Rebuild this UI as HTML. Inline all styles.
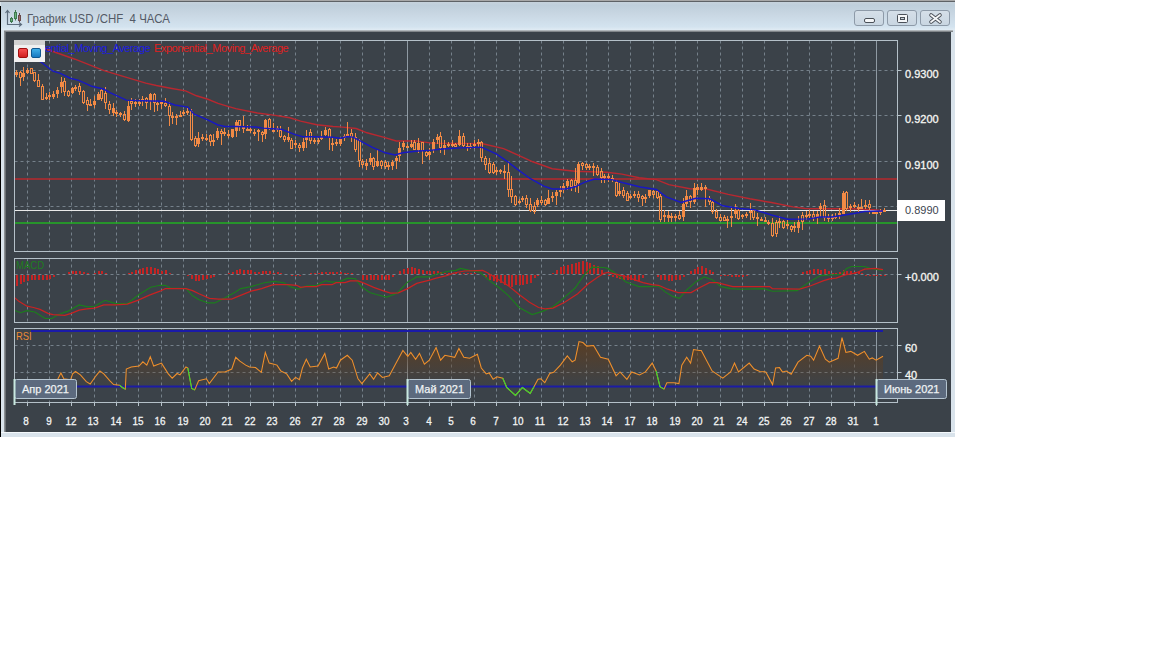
<!DOCTYPE html>
<html><head><meta charset="utf-8"><style>
html,body{margin:0;padding:0;background:#fff;width:1152px;height:648px;overflow:hidden;font-family:"Liberation Sans",sans-serif}
#win{position:absolute;left:0;top:0;width:955px;height:437px;background:#d9e3eb;}
#topb{position:absolute;left:0;top:0;width:955px;height:2px;background:linear-gradient(#a8a8a8 50%,#5e6266 50%)}
#lb{position:absolute;left:0;top:6px;width:1px;height:431px;background:#000}
#tb{position:absolute;left:1px;top:2px;width:954px;height:28px;background:linear-gradient(#c6d2dc 0%,#bfcfdb 12%,#c9d7e3 45%,#d3e3ef 88%,#e0ebf4 100%)}
#title{position:absolute;left:26.5px;top:12px;font-size:12.5px;transform:scaleX(0.915);transform-origin:0 0;color:#545a66;white-space:nowrap}
#dark{position:absolute;left:6px;top:32px;width:945px;height:400px;background:#3b4249}
#shadowT{position:absolute;left:4px;top:30px;width:949px;height:2px;background:linear-gradient(#c8ced2,#6a6e72)}
#shadowL{position:absolute;left:4px;top:32px;width:2px;height:400px;background:linear-gradient(90deg,#9aa0a4,#5a5e62)}
#botw{position:absolute;left:1px;top:432px;width:954px;height:1px;background:#f4f8fb}
svg{position:absolute;left:0;top:0}
.dl{position:absolute;top:415px;width:40px;text-align:center;font-size:11px;color:#f2f4f4;line-height:13px;-webkit-text-stroke:0.3px #f2f4f4;transform:scaleX(0.9)}
.pl{position:absolute;left:905px;font-size:11px;color:#f6f6f2;line-height:13px;-webkit-text-stroke:0.3px #f6f6f2}
.mb{position:absolute;top:383px;font-size:11px;color:#eef2f4;line-height:13px;white-space:nowrap;-webkit-text-stroke:0.25px #eef2f4}
.btn{position:absolute;top:10px;width:28px;height:14px;border:1px solid #8d9aa8;border-radius:3px;background:linear-gradient(#d5dfe8,#c9d6e1)}
#leg{position:absolute;left:14px;top:40px;width:31px;height:22px;background:#f0f0f0}
#legt{position:absolute;left:14px;top:40px;width:31px;height:5px;background:#d2d2d2}
.sq{position:absolute;top:48px;width:8px;height:8px;border-radius:2px}
.lgt{position:absolute;top:42px;font-size:11px;letter-spacing:-0.45px;line-height:13px;white-space:nowrap}
#macdl{position:absolute;left:16px;top:259px;font-size:11px;line-height:13px;color:#1e7e1e;transform:scaleX(0.87);transform-origin:0 0}
#rsil{position:absolute;left:15px;top:329px;width:16px;height:13px;background:#3b4249;overflow:hidden}
#rsit{position:absolute;left:16px;top:330px;font-size:11px;line-height:13px;color:#ec8c34;transform:scaleX(0.85);transform-origin:0 0}
</style></head><body>
<div id="win">
<div id="topb"></div>
<div id="tb"></div>
<div id="lb"></div>
<div id="title">График USD /CHF&nbsp; 4 ЧАСА</div>
<div class="btn" style="left:854px"></div>
<div class="btn" style="left:887px"></div>
<div class="btn" style="left:920px"></div>
<svg width="955" height="31" style="position:absolute;left:0;top:0">
<g fill="none" stroke="#5d6c7c" stroke-width="1.2">
<path d="M7.5 11 V24.5 H21"/><path d="M5.5 13 L7.5 10.5 L9.5 13"/><path d="M19 22.5 L21.5 24.5 L19 26.5"/>
</g>
<g stroke-width="1">
<line x1="11.5" y1="17" x2="11.5" y2="23" stroke="#3f7a4f"/><rect x="10.5" y="18.5" width="2" height="3" fill="#6ab07a" stroke="#3f7a4f"/>
<line x1="15.5" y1="10" x2="15.5" y2="20.5" stroke="#3f7a4f"/><rect x="14.5" y="12.5" width="2" height="6" fill="#6ab07a" stroke="#3f7a4f"/>
<line x1="19.5" y1="13" x2="19.5" y2="22" stroke="#6a4a4a"/><rect x="18.5" y="15.5" width="2" height="5" fill="#a06a6a" stroke="#6a4a4a"/>
</g>
<rect x="864.5" y="18.5" width="10" height="4" rx="1.5" fill="#f4f6f8" stroke="#4a5058" stroke-width="1"/>
<rect x="897.5" y="14.5" width="10" height="8" rx="1" fill="#f4f6f8" stroke="#4a5058" stroke-width="1"/>
<rect x="900.5" y="17.5" width="4" height="2" fill="#c8d0d8" stroke="#4a5058" stroke-width="1"/>
<path d="M931 15 L940 22 M940 15 L931 22" stroke="#4a5058" stroke-width="3.6" stroke-linecap="round"/>
<path d="M931 15 L940 22 M940 15 L931 22" stroke="#f4f6f8" stroke-width="1.8" stroke-linecap="round"/>
</svg>
<div id="shadowT"></div><div id="shadowL"></div>
<div id="dark"></div>
<div id="botw"></div>
</div>
<svg width="1152" height="648" viewBox="0 0 1152 648">
<defs><clipPath id="cp1"><rect x="15" y="41" width="882" height="210"/></clipPath><clipPath id="cp2"><rect x="15" y="259" width="882" height="63"/></clipPath><clipPath id="cp3"><rect x="15" y="329" width="882" height="73"/></clipPath><linearGradient id="rg" x1="0" y1="338" x2="0" y2="388" gradientUnits="userSpaceOnUse"><stop offset="0" stop-color="#5e3e20" stop-opacity="0.95"/><stop offset="1" stop-color="#5e3e20" stop-opacity="0"/></linearGradient></defs>
<line x1="27.5" y1="40.5" x2="27.5" y2="251.5" stroke="#75808a" stroke-dasharray="3 3"/>
<line x1="49.5" y1="40.5" x2="49.5" y2="251.5" stroke="#75808a" stroke-dasharray="3 3"/>
<line x1="71.5" y1="40.5" x2="71.5" y2="251.5" stroke="#75808a" stroke-dasharray="3 3"/>
<line x1="94.5" y1="40.5" x2="94.5" y2="251.5" stroke="#75808a" stroke-dasharray="3 3"/>
<line x1="116.5" y1="40.5" x2="116.5" y2="251.5" stroke="#75808a" stroke-dasharray="3 3"/>
<line x1="138.5" y1="40.5" x2="138.5" y2="251.5" stroke="#75808a" stroke-dasharray="3 3"/>
<line x1="161.5" y1="40.5" x2="161.5" y2="251.5" stroke="#75808a" stroke-dasharray="3 3"/>
<line x1="183.5" y1="40.5" x2="183.5" y2="251.5" stroke="#75808a" stroke-dasharray="3 3"/>
<line x1="206.5" y1="40.5" x2="206.5" y2="251.5" stroke="#75808a" stroke-dasharray="3 3"/>
<line x1="228.5" y1="40.5" x2="228.5" y2="251.5" stroke="#75808a" stroke-dasharray="3 3"/>
<line x1="250.5" y1="40.5" x2="250.5" y2="251.5" stroke="#75808a" stroke-dasharray="3 3"/>
<line x1="273.5" y1="40.5" x2="273.5" y2="251.5" stroke="#75808a" stroke-dasharray="3 3"/>
<line x1="295.5" y1="40.5" x2="295.5" y2="251.5" stroke="#75808a" stroke-dasharray="3 3"/>
<line x1="317.5" y1="40.5" x2="317.5" y2="251.5" stroke="#75808a" stroke-dasharray="3 3"/>
<line x1="340.5" y1="40.5" x2="340.5" y2="251.5" stroke="#75808a" stroke-dasharray="3 3"/>
<line x1="362.5" y1="40.5" x2="362.5" y2="251.5" stroke="#75808a" stroke-dasharray="3 3"/>
<line x1="384.5" y1="40.5" x2="384.5" y2="251.5" stroke="#75808a" stroke-dasharray="3 3"/>
<line x1="429.5" y1="40.5" x2="429.5" y2="251.5" stroke="#75808a" stroke-dasharray="3 3"/>
<line x1="451.5" y1="40.5" x2="451.5" y2="251.5" stroke="#75808a" stroke-dasharray="3 3"/>
<line x1="474.5" y1="40.5" x2="474.5" y2="251.5" stroke="#75808a" stroke-dasharray="3 3"/>
<line x1="496.5" y1="40.5" x2="496.5" y2="251.5" stroke="#75808a" stroke-dasharray="3 3"/>
<line x1="519.5" y1="40.5" x2="519.5" y2="251.5" stroke="#75808a" stroke-dasharray="3 3"/>
<line x1="541.5" y1="40.5" x2="541.5" y2="251.5" stroke="#75808a" stroke-dasharray="3 3"/>
<line x1="563.5" y1="40.5" x2="563.5" y2="251.5" stroke="#75808a" stroke-dasharray="3 3"/>
<line x1="586.5" y1="40.5" x2="586.5" y2="251.5" stroke="#75808a" stroke-dasharray="3 3"/>
<line x1="608.5" y1="40.5" x2="608.5" y2="251.5" stroke="#75808a" stroke-dasharray="3 3"/>
<line x1="630.5" y1="40.5" x2="630.5" y2="251.5" stroke="#75808a" stroke-dasharray="3 3"/>
<line x1="653.5" y1="40.5" x2="653.5" y2="251.5" stroke="#75808a" stroke-dasharray="3 3"/>
<line x1="675.5" y1="40.5" x2="675.5" y2="251.5" stroke="#75808a" stroke-dasharray="3 3"/>
<line x1="697.5" y1="40.5" x2="697.5" y2="251.5" stroke="#75808a" stroke-dasharray="3 3"/>
<line x1="720.5" y1="40.5" x2="720.5" y2="251.5" stroke="#75808a" stroke-dasharray="3 3"/>
<line x1="742.5" y1="40.5" x2="742.5" y2="251.5" stroke="#75808a" stroke-dasharray="3 3"/>
<line x1="764.5" y1="40.5" x2="764.5" y2="251.5" stroke="#75808a" stroke-dasharray="3 3"/>
<line x1="787.5" y1="40.5" x2="787.5" y2="251.5" stroke="#75808a" stroke-dasharray="3 3"/>
<line x1="809.5" y1="40.5" x2="809.5" y2="251.5" stroke="#75808a" stroke-dasharray="3 3"/>
<line x1="831.5" y1="40.5" x2="831.5" y2="251.5" stroke="#75808a" stroke-dasharray="3 3"/>
<line x1="854.5" y1="40.5" x2="854.5" y2="251.5" stroke="#75808a" stroke-dasharray="3 3"/>
<line x1="27.5" y1="258.5" x2="27.5" y2="322.5" stroke="#75808a" stroke-dasharray="3 3"/>
<line x1="49.5" y1="258.5" x2="49.5" y2="322.5" stroke="#75808a" stroke-dasharray="3 3"/>
<line x1="71.5" y1="258.5" x2="71.5" y2="322.5" stroke="#75808a" stroke-dasharray="3 3"/>
<line x1="94.5" y1="258.5" x2="94.5" y2="322.5" stroke="#75808a" stroke-dasharray="3 3"/>
<line x1="116.5" y1="258.5" x2="116.5" y2="322.5" stroke="#75808a" stroke-dasharray="3 3"/>
<line x1="138.5" y1="258.5" x2="138.5" y2="322.5" stroke="#75808a" stroke-dasharray="3 3"/>
<line x1="161.5" y1="258.5" x2="161.5" y2="322.5" stroke="#75808a" stroke-dasharray="3 3"/>
<line x1="183.5" y1="258.5" x2="183.5" y2="322.5" stroke="#75808a" stroke-dasharray="3 3"/>
<line x1="206.5" y1="258.5" x2="206.5" y2="322.5" stroke="#75808a" stroke-dasharray="3 3"/>
<line x1="228.5" y1="258.5" x2="228.5" y2="322.5" stroke="#75808a" stroke-dasharray="3 3"/>
<line x1="250.5" y1="258.5" x2="250.5" y2="322.5" stroke="#75808a" stroke-dasharray="3 3"/>
<line x1="273.5" y1="258.5" x2="273.5" y2="322.5" stroke="#75808a" stroke-dasharray="3 3"/>
<line x1="295.5" y1="258.5" x2="295.5" y2="322.5" stroke="#75808a" stroke-dasharray="3 3"/>
<line x1="317.5" y1="258.5" x2="317.5" y2="322.5" stroke="#75808a" stroke-dasharray="3 3"/>
<line x1="340.5" y1="258.5" x2="340.5" y2="322.5" stroke="#75808a" stroke-dasharray="3 3"/>
<line x1="362.5" y1="258.5" x2="362.5" y2="322.5" stroke="#75808a" stroke-dasharray="3 3"/>
<line x1="384.5" y1="258.5" x2="384.5" y2="322.5" stroke="#75808a" stroke-dasharray="3 3"/>
<line x1="429.5" y1="258.5" x2="429.5" y2="322.5" stroke="#75808a" stroke-dasharray="3 3"/>
<line x1="451.5" y1="258.5" x2="451.5" y2="322.5" stroke="#75808a" stroke-dasharray="3 3"/>
<line x1="474.5" y1="258.5" x2="474.5" y2="322.5" stroke="#75808a" stroke-dasharray="3 3"/>
<line x1="496.5" y1="258.5" x2="496.5" y2="322.5" stroke="#75808a" stroke-dasharray="3 3"/>
<line x1="519.5" y1="258.5" x2="519.5" y2="322.5" stroke="#75808a" stroke-dasharray="3 3"/>
<line x1="541.5" y1="258.5" x2="541.5" y2="322.5" stroke="#75808a" stroke-dasharray="3 3"/>
<line x1="563.5" y1="258.5" x2="563.5" y2="322.5" stroke="#75808a" stroke-dasharray="3 3"/>
<line x1="586.5" y1="258.5" x2="586.5" y2="322.5" stroke="#75808a" stroke-dasharray="3 3"/>
<line x1="608.5" y1="258.5" x2="608.5" y2="322.5" stroke="#75808a" stroke-dasharray="3 3"/>
<line x1="630.5" y1="258.5" x2="630.5" y2="322.5" stroke="#75808a" stroke-dasharray="3 3"/>
<line x1="653.5" y1="258.5" x2="653.5" y2="322.5" stroke="#75808a" stroke-dasharray="3 3"/>
<line x1="675.5" y1="258.5" x2="675.5" y2="322.5" stroke="#75808a" stroke-dasharray="3 3"/>
<line x1="697.5" y1="258.5" x2="697.5" y2="322.5" stroke="#75808a" stroke-dasharray="3 3"/>
<line x1="720.5" y1="258.5" x2="720.5" y2="322.5" stroke="#75808a" stroke-dasharray="3 3"/>
<line x1="742.5" y1="258.5" x2="742.5" y2="322.5" stroke="#75808a" stroke-dasharray="3 3"/>
<line x1="764.5" y1="258.5" x2="764.5" y2="322.5" stroke="#75808a" stroke-dasharray="3 3"/>
<line x1="787.5" y1="258.5" x2="787.5" y2="322.5" stroke="#75808a" stroke-dasharray="3 3"/>
<line x1="809.5" y1="258.5" x2="809.5" y2="322.5" stroke="#75808a" stroke-dasharray="3 3"/>
<line x1="831.5" y1="258.5" x2="831.5" y2="322.5" stroke="#75808a" stroke-dasharray="3 3"/>
<line x1="854.5" y1="258.5" x2="854.5" y2="322.5" stroke="#75808a" stroke-dasharray="3 3"/>
<line x1="27.5" y1="328.5" x2="27.5" y2="402.5" stroke="#75808a" stroke-dasharray="3 3"/>
<line x1="49.5" y1="328.5" x2="49.5" y2="402.5" stroke="#75808a" stroke-dasharray="3 3"/>
<line x1="71.5" y1="328.5" x2="71.5" y2="402.5" stroke="#75808a" stroke-dasharray="3 3"/>
<line x1="94.5" y1="328.5" x2="94.5" y2="402.5" stroke="#75808a" stroke-dasharray="3 3"/>
<line x1="116.5" y1="328.5" x2="116.5" y2="402.5" stroke="#75808a" stroke-dasharray="3 3"/>
<line x1="138.5" y1="328.5" x2="138.5" y2="402.5" stroke="#75808a" stroke-dasharray="3 3"/>
<line x1="161.5" y1="328.5" x2="161.5" y2="402.5" stroke="#75808a" stroke-dasharray="3 3"/>
<line x1="183.5" y1="328.5" x2="183.5" y2="402.5" stroke="#75808a" stroke-dasharray="3 3"/>
<line x1="206.5" y1="328.5" x2="206.5" y2="402.5" stroke="#75808a" stroke-dasharray="3 3"/>
<line x1="228.5" y1="328.5" x2="228.5" y2="402.5" stroke="#75808a" stroke-dasharray="3 3"/>
<line x1="250.5" y1="328.5" x2="250.5" y2="402.5" stroke="#75808a" stroke-dasharray="3 3"/>
<line x1="273.5" y1="328.5" x2="273.5" y2="402.5" stroke="#75808a" stroke-dasharray="3 3"/>
<line x1="295.5" y1="328.5" x2="295.5" y2="402.5" stroke="#75808a" stroke-dasharray="3 3"/>
<line x1="317.5" y1="328.5" x2="317.5" y2="402.5" stroke="#75808a" stroke-dasharray="3 3"/>
<line x1="340.5" y1="328.5" x2="340.5" y2="402.5" stroke="#75808a" stroke-dasharray="3 3"/>
<line x1="362.5" y1="328.5" x2="362.5" y2="402.5" stroke="#75808a" stroke-dasharray="3 3"/>
<line x1="384.5" y1="328.5" x2="384.5" y2="402.5" stroke="#75808a" stroke-dasharray="3 3"/>
<line x1="429.5" y1="328.5" x2="429.5" y2="402.5" stroke="#75808a" stroke-dasharray="3 3"/>
<line x1="451.5" y1="328.5" x2="451.5" y2="402.5" stroke="#75808a" stroke-dasharray="3 3"/>
<line x1="474.5" y1="328.5" x2="474.5" y2="402.5" stroke="#75808a" stroke-dasharray="3 3"/>
<line x1="496.5" y1="328.5" x2="496.5" y2="402.5" stroke="#75808a" stroke-dasharray="3 3"/>
<line x1="519.5" y1="328.5" x2="519.5" y2="402.5" stroke="#75808a" stroke-dasharray="3 3"/>
<line x1="541.5" y1="328.5" x2="541.5" y2="402.5" stroke="#75808a" stroke-dasharray="3 3"/>
<line x1="563.5" y1="328.5" x2="563.5" y2="402.5" stroke="#75808a" stroke-dasharray="3 3"/>
<line x1="586.5" y1="328.5" x2="586.5" y2="402.5" stroke="#75808a" stroke-dasharray="3 3"/>
<line x1="608.5" y1="328.5" x2="608.5" y2="402.5" stroke="#75808a" stroke-dasharray="3 3"/>
<line x1="630.5" y1="328.5" x2="630.5" y2="402.5" stroke="#75808a" stroke-dasharray="3 3"/>
<line x1="653.5" y1="328.5" x2="653.5" y2="402.5" stroke="#75808a" stroke-dasharray="3 3"/>
<line x1="675.5" y1="328.5" x2="675.5" y2="402.5" stroke="#75808a" stroke-dasharray="3 3"/>
<line x1="697.5" y1="328.5" x2="697.5" y2="402.5" stroke="#75808a" stroke-dasharray="3 3"/>
<line x1="720.5" y1="328.5" x2="720.5" y2="402.5" stroke="#75808a" stroke-dasharray="3 3"/>
<line x1="742.5" y1="328.5" x2="742.5" y2="402.5" stroke="#75808a" stroke-dasharray="3 3"/>
<line x1="764.5" y1="328.5" x2="764.5" y2="402.5" stroke="#75808a" stroke-dasharray="3 3"/>
<line x1="787.5" y1="328.5" x2="787.5" y2="402.5" stroke="#75808a" stroke-dasharray="3 3"/>
<line x1="809.5" y1="328.5" x2="809.5" y2="402.5" stroke="#75808a" stroke-dasharray="3 3"/>
<line x1="831.5" y1="328.5" x2="831.5" y2="402.5" stroke="#75808a" stroke-dasharray="3 3"/>
<line x1="854.5" y1="328.5" x2="854.5" y2="402.5" stroke="#75808a" stroke-dasharray="3 3"/>
<line x1="14.5" y1="70.5" x2="897.5" y2="70.5" stroke="#75808a" stroke-dasharray="3 3"/>
<line x1="897.5" y1="70.5" x2="901.5" y2="70.5" stroke="#b8c4cc"/>
<line x1="14.5" y1="115.5" x2="897.5" y2="115.5" stroke="#75808a" stroke-dasharray="3 3"/>
<line x1="897.5" y1="115.5" x2="901.5" y2="115.5" stroke="#b8c4cc"/>
<line x1="14.5" y1="161.5" x2="897.5" y2="161.5" stroke="#75808a" stroke-dasharray="3 3"/>
<line x1="897.5" y1="161.5" x2="901.5" y2="161.5" stroke="#b8c4cc"/>
<line x1="14.5" y1="206.5" x2="897.5" y2="206.5" stroke="#75808a" stroke-dasharray="3 3"/>
<line x1="897.5" y1="206.5" x2="901.5" y2="206.5" stroke="#b8c4cc"/>
<line x1="14.5" y1="274.5" x2="897.5" y2="274.5" stroke="#75808a" stroke-dasharray="3 3"/>
<line x1="897.5" y1="274.5" x2="901.5" y2="274.5" stroke="#b8c4cc"/>
<line x1="14.5" y1="345.5" x2="897.5" y2="345.5" stroke="#75808a" stroke-dasharray="3 3"/>
<line x1="897.5" y1="345.5" x2="901.5" y2="345.5" stroke="#b8c4cc"/>
<line x1="14.5" y1="372.5" x2="897.5" y2="372.5" stroke="#75808a" stroke-dasharray="3 3"/>
<line x1="897.5" y1="372.5" x2="901.5" y2="372.5" stroke="#b8c4cc"/>
<line x1="407.5" y1="40.5" x2="407.5" y2="251.5" stroke="#8f9aa3"/>
<line x1="407.5" y1="258.5" x2="407.5" y2="322.5" stroke="#8f9aa3"/>
<line x1="407.5" y1="328.5" x2="407.5" y2="402.5" stroke="#8f9aa3"/>
<line x1="876.5" y1="40.5" x2="876.5" y2="251.5" stroke="#8f9aa3"/>
<line x1="876.5" y1="258.5" x2="876.5" y2="322.5" stroke="#8f9aa3"/>
<line x1="876.5" y1="328.5" x2="876.5" y2="402.5" stroke="#8f9aa3"/>
<line x1="27.5" y1="402" x2="27.5" y2="406" stroke="#b8c4cc"/>
<line x1="49.5" y1="402" x2="49.5" y2="406" stroke="#b8c4cc"/>
<line x1="71.5" y1="402" x2="71.5" y2="406" stroke="#b8c4cc"/>
<line x1="94.5" y1="402" x2="94.5" y2="406" stroke="#b8c4cc"/>
<line x1="116.5" y1="402" x2="116.5" y2="406" stroke="#b8c4cc"/>
<line x1="138.5" y1="402" x2="138.5" y2="406" stroke="#b8c4cc"/>
<line x1="161.5" y1="402" x2="161.5" y2="406" stroke="#b8c4cc"/>
<line x1="183.5" y1="402" x2="183.5" y2="406" stroke="#b8c4cc"/>
<line x1="206.5" y1="402" x2="206.5" y2="406" stroke="#b8c4cc"/>
<line x1="228.5" y1="402" x2="228.5" y2="406" stroke="#b8c4cc"/>
<line x1="250.5" y1="402" x2="250.5" y2="406" stroke="#b8c4cc"/>
<line x1="273.5" y1="402" x2="273.5" y2="406" stroke="#b8c4cc"/>
<line x1="295.5" y1="402" x2="295.5" y2="406" stroke="#b8c4cc"/>
<line x1="317.5" y1="402" x2="317.5" y2="406" stroke="#b8c4cc"/>
<line x1="340.5" y1="402" x2="340.5" y2="406" stroke="#b8c4cc"/>
<line x1="362.5" y1="402" x2="362.5" y2="406" stroke="#b8c4cc"/>
<line x1="384.5" y1="402" x2="384.5" y2="406" stroke="#b8c4cc"/>
<line x1="407.5" y1="402" x2="407.5" y2="406" stroke="#b8c4cc"/>
<line x1="429.5" y1="402" x2="429.5" y2="406" stroke="#b8c4cc"/>
<line x1="451.5" y1="402" x2="451.5" y2="406" stroke="#b8c4cc"/>
<line x1="474.5" y1="402" x2="474.5" y2="406" stroke="#b8c4cc"/>
<line x1="496.5" y1="402" x2="496.5" y2="406" stroke="#b8c4cc"/>
<line x1="519.5" y1="402" x2="519.5" y2="406" stroke="#b8c4cc"/>
<line x1="541.5" y1="402" x2="541.5" y2="406" stroke="#b8c4cc"/>
<line x1="563.5" y1="402" x2="563.5" y2="406" stroke="#b8c4cc"/>
<line x1="586.5" y1="402" x2="586.5" y2="406" stroke="#b8c4cc"/>
<line x1="608.5" y1="402" x2="608.5" y2="406" stroke="#b8c4cc"/>
<line x1="630.5" y1="402" x2="630.5" y2="406" stroke="#b8c4cc"/>
<line x1="653.5" y1="402" x2="653.5" y2="406" stroke="#b8c4cc"/>
<line x1="675.5" y1="402" x2="675.5" y2="406" stroke="#b8c4cc"/>
<line x1="697.5" y1="402" x2="697.5" y2="406" stroke="#b8c4cc"/>
<line x1="720.5" y1="402" x2="720.5" y2="406" stroke="#b8c4cc"/>
<line x1="742.5" y1="402" x2="742.5" y2="406" stroke="#b8c4cc"/>
<line x1="764.5" y1="402" x2="764.5" y2="406" stroke="#b8c4cc"/>
<line x1="787.5" y1="402" x2="787.5" y2="406" stroke="#b8c4cc"/>
<line x1="809.5" y1="402" x2="809.5" y2="406" stroke="#b8c4cc"/>
<line x1="831.5" y1="402" x2="831.5" y2="406" stroke="#b8c4cc"/>
<line x1="854.5" y1="402" x2="854.5" y2="406" stroke="#b8c4cc"/>
<line x1="876.5" y1="402" x2="876.5" y2="406" stroke="#b8c4cc"/>
<g clip-path="url(#cp1)">
<line x1="14.5" y1="179" x2="897.5" y2="179" stroke="#b8282c" stroke-width="1.6"/>
<line x1="14.5" y1="223" x2="897.5" y2="223" stroke="#22b022" stroke-width="1.6"/>
<line x1="14.5" y1="210.5" x2="897.5" y2="210.5" stroke="#e8e8e8"/>
<polyline points="14.0,40.0 30.0,44.0 48.0,49.8 75.0,59.2 104.0,70.6 145.8,83.1 156.4,85.5 170.5,88.2 185.6,90.9 196.4,95.8 207.2,99.0 218.0,103.4 228.8,106.6 235.8,108.6 257.4,113.0 273.6,115.1 289.8,117.8 300.6,121.1 316.8,124.8 333.0,126.5 340.0,126.9 356.2,128.5 367.0,132.8 383.2,137.1 396.2,140.9 415.6,140.9 431.8,143.1 460.0,143.4 482.8,143.8 503.6,148.6 517.5,154.9 532.8,161.8 552.2,168.8 575.0,171.2 607.0,172.2 621.9,174.1 639.1,177.8 656.4,179.6 668.8,184.6 690.0,188.7 706.6,189.0 728.2,194.4 749.8,198.8 771.4,202.5 793.0,206.9 805.0,208.5 818.0,208.7 850.5,208.7 873.7,209.6 883.0,210.6" fill="none" stroke="#b82830" stroke-width="1.45"/>
<g shape-rendering="crispEdges">
<rect x="16" y="70" width="1" height="7" fill="#f28a45"/>
<rect x="15" y="72" width="3" height="3" fill="#f28a45"/>
<rect x="20" y="71" width="1" height="1" fill="#f28a45"/>
<rect x="20" y="78" width="1" height="8" fill="#f28a45"/>
<rect x="19" y="72" width="1" height="6" fill="#f28a45"/><rect x="21" y="72" width="1" height="6" fill="#f28a45"/><rect x="20" y="72" width="1" height="1" fill="#f28a45"/><rect x="20" y="77" width="1" height="1" fill="#f28a45"/>
<rect x="23" y="67" width="1" height="14" fill="#f28a45"/>
<rect x="22" y="73" width="3" height="4" fill="#f28a45"/>
<rect x="27" y="68" width="1" height="6" fill="#f28a45"/>
<rect x="26" y="70" width="3" height="3" fill="#f28a45"/>
<rect x="30" y="68" width="1" height="6" fill="#f28a45"/><rect x="32" y="68" width="1" height="6" fill="#f28a45"/><rect x="31" y="68" width="1" height="1" fill="#f28a45"/><rect x="31" y="73" width="1" height="1" fill="#f28a45"/>
<rect x="34" y="81" width="1" height="1" fill="#f28a45"/>
<rect x="33" y="72" width="1" height="9" fill="#f28a45"/><rect x="35" y="72" width="1" height="9" fill="#f28a45"/><rect x="34" y="72" width="1" height="1" fill="#f28a45"/><rect x="34" y="80" width="1" height="1" fill="#f28a45"/>
<rect x="38" y="74" width="1" height="6" fill="#f28a45"/>
<rect x="37" y="80" width="1" height="7" fill="#f28a45"/><rect x="39" y="80" width="1" height="7" fill="#f28a45"/><rect x="38" y="80" width="1" height="1" fill="#f28a45"/><rect x="38" y="86" width="1" height="1" fill="#f28a45"/>
<rect x="42" y="84" width="1" height="2" fill="#f28a45"/>
<rect x="41" y="86" width="1" height="14" fill="#f28a45"/><rect x="43" y="86" width="1" height="14" fill="#f28a45"/><rect x="42" y="86" width="1" height="1" fill="#f28a45"/><rect x="42" y="99" width="1" height="1" fill="#f28a45"/>
<rect x="46" y="93" width="1" height="7" fill="#f28a45"/>
<rect x="45" y="97" width="3" height="2" fill="#f28a45"/>
<rect x="49" y="92" width="1" height="3" fill="#f28a45"/>
<rect x="49" y="97" width="1" height="3" fill="#f28a45"/>
<rect x="48" y="95" width="1" height="2" fill="#f28a45"/><rect x="50" y="95" width="1" height="2" fill="#f28a45"/><rect x="49" y="95" width="1" height="1" fill="#f28a45"/><rect x="49" y="96" width="1" height="1" fill="#f28a45"/>
<rect x="53" y="91" width="1" height="8" fill="#f28a45"/>
<rect x="52" y="94" width="3" height="3" fill="#f28a45"/>
<rect x="57" y="87" width="1" height="11" fill="#f28a45"/>
<rect x="56" y="90" width="3" height="4" fill="#f28a45"/>
<rect x="61" y="77" width="1" height="16" fill="#f28a45"/>
<rect x="60" y="82" width="3" height="5" fill="#f28a45"/>
<rect x="64" y="78" width="1" height="3" fill="#f28a45"/>
<rect x="64" y="92" width="1" height="4" fill="#f28a45"/>
<rect x="63" y="81" width="1" height="11" fill="#f28a45"/><rect x="65" y="81" width="1" height="11" fill="#f28a45"/><rect x="64" y="81" width="1" height="1" fill="#f28a45"/><rect x="64" y="91" width="1" height="1" fill="#f28a45"/>
<rect x="68" y="90" width="1" height="1" fill="#f28a45"/>
<rect x="68" y="96" width="1" height="1" fill="#f28a45"/>
<rect x="67" y="91" width="1" height="5" fill="#f28a45"/><rect x="69" y="91" width="1" height="5" fill="#f28a45"/><rect x="68" y="91" width="1" height="1" fill="#f28a45"/><rect x="68" y="95" width="1" height="1" fill="#f28a45"/>
<rect x="72" y="87" width="1" height="7" fill="#f28a45"/>
<rect x="71" y="88" width="3" height="5" fill="#f28a45"/>
<rect x="75" y="85" width="1" height="6" fill="#f28a45"/>
<rect x="74" y="87" width="3" height="2" fill="#f28a45"/>
<rect x="79" y="83" width="1" height="3" fill="#f28a45"/>
<rect x="79" y="92" width="1" height="3" fill="#f28a45"/>
<rect x="78" y="86" width="1" height="6" fill="#f28a45"/><rect x="80" y="86" width="1" height="6" fill="#f28a45"/><rect x="79" y="86" width="1" height="1" fill="#f28a45"/><rect x="79" y="91" width="1" height="1" fill="#f28a45"/>
<rect x="83" y="90" width="1" height="1" fill="#f28a45"/>
<rect x="83" y="103" width="1" height="1" fill="#f28a45"/>
<rect x="82" y="91" width="1" height="12" fill="#f28a45"/><rect x="84" y="91" width="1" height="12" fill="#f28a45"/><rect x="83" y="91" width="1" height="1" fill="#f28a45"/><rect x="83" y="102" width="1" height="1" fill="#f28a45"/>
<rect x="87" y="97" width="1" height="3" fill="#f28a45"/>
<rect x="87" y="105" width="1" height="6" fill="#f28a45"/>
<rect x="86" y="100" width="1" height="5" fill="#f28a45"/><rect x="88" y="100" width="1" height="5" fill="#f28a45"/><rect x="87" y="100" width="1" height="1" fill="#f28a45"/><rect x="87" y="104" width="1" height="1" fill="#f28a45"/>
<rect x="90" y="99" width="1" height="7" fill="#f28a45"/>
<rect x="89" y="104" width="3" height="2" fill="#f28a45"/>
<rect x="94" y="96" width="1" height="12" fill="#f28a45"/>
<rect x="93" y="101" width="3" height="4" fill="#f28a45"/>
<rect x="98" y="92" width="1" height="8" fill="#f28a45"/>
<rect x="97" y="94" width="3" height="6" fill="#f28a45"/>
<rect x="101" y="88" width="1" height="2" fill="#f28a45"/>
<rect x="101" y="99" width="1" height="2" fill="#f28a45"/>
<rect x="100" y="90" width="1" height="9" fill="#f28a45"/><rect x="102" y="90" width="1" height="9" fill="#f28a45"/><rect x="101" y="90" width="1" height="1" fill="#f28a45"/><rect x="101" y="98" width="1" height="1" fill="#f28a45"/>
<rect x="105" y="87" width="1" height="6" fill="#f28a45"/>
<rect x="105" y="103" width="1" height="6" fill="#f28a45"/>
<rect x="104" y="93" width="1" height="10" fill="#f28a45"/><rect x="106" y="93" width="1" height="10" fill="#f28a45"/><rect x="105" y="93" width="1" height="1" fill="#f28a45"/><rect x="105" y="102" width="1" height="1" fill="#f28a45"/>
<rect x="109" y="101" width="1" height="3" fill="#f28a45"/>
<rect x="109" y="110" width="1" height="4" fill="#f28a45"/>
<rect x="108" y="104" width="1" height="6" fill="#f28a45"/><rect x="110" y="104" width="1" height="6" fill="#f28a45"/><rect x="109" y="104" width="1" height="1" fill="#f28a45"/><rect x="109" y="109" width="1" height="1" fill="#f28a45"/>
<rect x="113" y="103" width="1" height="13" fill="#f28a45"/>
<rect x="112" y="108" width="3" height="5" fill="#f28a45"/>
<rect x="116" y="110" width="1" height="7" fill="#f28a45"/>
<rect x="115" y="112" width="3" height="2" fill="#f28a45"/>
<rect x="120" y="112" width="1" height="1" fill="#f28a45"/>
<rect x="120" y="115" width="1" height="2" fill="#f28a45"/>
<rect x="119" y="113" width="1" height="2" fill="#f28a45"/><rect x="121" y="113" width="1" height="2" fill="#f28a45"/><rect x="120" y="113" width="1" height="1" fill="#f28a45"/><rect x="120" y="114" width="1" height="1" fill="#f28a45"/>
<rect x="124" y="111" width="1" height="3" fill="#f28a45"/>
<rect x="124" y="120" width="1" height="1" fill="#f28a45"/>
<rect x="123" y="114" width="1" height="6" fill="#f28a45"/><rect x="125" y="114" width="1" height="6" fill="#f28a45"/><rect x="124" y="114" width="1" height="1" fill="#f28a45"/><rect x="124" y="119" width="1" height="1" fill="#f28a45"/>
<rect x="128" y="101" width="1" height="21" fill="#f28a45"/>
<rect x="127" y="106" width="3" height="15" fill="#f28a45"/>
<rect x="131" y="98" width="1" height="3" fill="#f28a45"/>
<rect x="131" y="104" width="1" height="6" fill="#f28a45"/>
<rect x="130" y="101" width="1" height="3" fill="#f28a45"/><rect x="132" y="101" width="1" height="3" fill="#f28a45"/><rect x="131" y="101" width="1" height="1" fill="#f28a45"/><rect x="131" y="103" width="1" height="1" fill="#f28a45"/>
<rect x="135" y="99" width="1" height="8" fill="#f28a45"/>
<rect x="134" y="102" width="3" height="2" fill="#f28a45"/>
<rect x="139" y="99" width="1" height="7" fill="#f28a45"/>
<rect x="138" y="102" width="3" height="2" fill="#f28a45"/>
<rect x="142" y="96" width="1" height="10" fill="#f28a45"/>
<rect x="141" y="99" width="3" height="2" fill="#f28a45"/>
<rect x="146" y="97" width="1" height="1" fill="#f28a45"/>
<rect x="146" y="103" width="1" height="6" fill="#f28a45"/>
<rect x="145" y="98" width="1" height="5" fill="#f28a45"/><rect x="147" y="98" width="1" height="5" fill="#f28a45"/><rect x="146" y="98" width="1" height="1" fill="#f28a45"/><rect x="146" y="102" width="1" height="1" fill="#f28a45"/>
<rect x="150" y="93" width="1" height="17" fill="#f28a45"/>
<rect x="149" y="94" width="3" height="7" fill="#f28a45"/>
<rect x="154" y="93" width="1" height="1" fill="#f28a45"/>
<rect x="154" y="103" width="1" height="9" fill="#f28a45"/>
<rect x="153" y="94" width="1" height="9" fill="#f28a45"/><rect x="155" y="94" width="1" height="9" fill="#f28a45"/><rect x="154" y="94" width="1" height="1" fill="#f28a45"/><rect x="154" y="102" width="1" height="1" fill="#f28a45"/>
<rect x="157" y="101" width="1" height="10" fill="#f28a45"/>
<rect x="156" y="103" width="3" height="2" fill="#f28a45"/>
<rect x="161" y="101" width="1" height="8" fill="#f28a45"/>
<rect x="160" y="102" width="3" height="2" fill="#f28a45"/>
<rect x="165" y="98" width="1" height="5" fill="#f28a45"/>
<rect x="165" y="106" width="1" height="1" fill="#f28a45"/>
<rect x="164" y="103" width="1" height="3" fill="#f28a45"/><rect x="166" y="103" width="1" height="3" fill="#f28a45"/><rect x="165" y="103" width="1" height="1" fill="#f28a45"/><rect x="165" y="105" width="1" height="1" fill="#f28a45"/>
<rect x="169" y="102" width="1" height="4" fill="#f28a45"/>
<rect x="169" y="116" width="1" height="10" fill="#f28a45"/>
<rect x="168" y="106" width="1" height="10" fill="#f28a45"/><rect x="170" y="106" width="1" height="10" fill="#f28a45"/><rect x="169" y="106" width="1" height="1" fill="#f28a45"/><rect x="169" y="115" width="1" height="1" fill="#f28a45"/>
<rect x="172" y="112" width="1" height="12" fill="#f28a45"/>
<rect x="171" y="116" width="3" height="2" fill="#f28a45"/>
<rect x="176" y="114" width="1" height="11" fill="#f28a45"/>
<rect x="175" y="116" width="3" height="2" fill="#f28a45"/>
<rect x="180" y="111" width="1" height="4" fill="#f28a45"/>
<rect x="179" y="115" width="1" height="2" fill="#f28a45"/><rect x="181" y="115" width="1" height="2" fill="#f28a45"/><rect x="180" y="115" width="1" height="1" fill="#f28a45"/><rect x="180" y="116" width="1" height="1" fill="#f28a45"/>
<rect x="183" y="110" width="1" height="6" fill="#f28a45"/>
<rect x="182" y="112" width="3" height="2" fill="#f28a45"/>
<rect x="187" y="108" width="1" height="7" fill="#f28a45"/>
<rect x="186" y="111" width="3" height="2" fill="#f28a45"/>
<rect x="191" y="109" width="1" height="2" fill="#f28a45"/>
<rect x="191" y="140" width="1" height="1" fill="#f28a45"/>
<rect x="190" y="111" width="1" height="29" fill="#f28a45"/><rect x="192" y="111" width="1" height="29" fill="#f28a45"/><rect x="191" y="111" width="1" height="1" fill="#f28a45"/><rect x="191" y="139" width="1" height="1" fill="#f28a45"/>
<rect x="195" y="136" width="1" height="2" fill="#f28a45"/>
<rect x="195" y="146" width="1" height="1" fill="#f28a45"/>
<rect x="194" y="138" width="1" height="8" fill="#f28a45"/><rect x="196" y="138" width="1" height="8" fill="#f28a45"/><rect x="195" y="138" width="1" height="1" fill="#f28a45"/><rect x="195" y="145" width="1" height="1" fill="#f28a45"/>
<rect x="198" y="132" width="1" height="15" fill="#f28a45"/>
<rect x="197" y="138" width="3" height="6" fill="#f28a45"/>
<rect x="202" y="134" width="1" height="7" fill="#f28a45"/>
<rect x="201" y="137" width="3" height="2" fill="#f28a45"/>
<rect x="206" y="134" width="1" height="7" fill="#f28a45"/>
<rect x="205" y="138" width="3" height="2" fill="#f28a45"/>
<rect x="210" y="134" width="1" height="1" fill="#f28a45"/>
<rect x="210" y="142" width="1" height="4" fill="#f28a45"/>
<rect x="209" y="135" width="1" height="7" fill="#f28a45"/><rect x="211" y="135" width="1" height="7" fill="#f28a45"/><rect x="210" y="135" width="1" height="1" fill="#f28a45"/><rect x="210" y="141" width="1" height="1" fill="#f28a45"/>
<rect x="213" y="134" width="1" height="12" fill="#f28a45"/>
<rect x="212" y="140" width="3" height="2" fill="#f28a45"/>
<rect x="217" y="128" width="1" height="12" fill="#f28a45"/>
<rect x="216" y="131" width="3" height="7" fill="#f28a45"/>
<rect x="221" y="129" width="1" height="2" fill="#f28a45"/>
<rect x="221" y="134" width="1" height="11" fill="#f28a45"/>
<rect x="220" y="131" width="1" height="3" fill="#f28a45"/><rect x="222" y="131" width="1" height="3" fill="#f28a45"/><rect x="221" y="131" width="1" height="1" fill="#f28a45"/><rect x="221" y="133" width="1" height="1" fill="#f28a45"/>
<rect x="224" y="128" width="1" height="8" fill="#f28a45"/>
<rect x="223" y="132" width="3" height="2" fill="#f28a45"/>
<rect x="228" y="130" width="1" height="8" fill="#f28a45"/>
<rect x="227" y="134" width="3" height="2" fill="#f28a45"/>
<rect x="232" y="129" width="1" height="9" fill="#f28a45"/>
<rect x="231" y="129" width="3" height="8" fill="#f28a45"/>
<rect x="236" y="120" width="1" height="17" fill="#f28a45"/>
<rect x="235" y="122" width="3" height="9" fill="#f28a45"/>
<rect x="239" y="126" width="1" height="5" fill="#f28a45"/>
<rect x="238" y="120" width="1" height="6" fill="#f28a45"/><rect x="240" y="120" width="1" height="6" fill="#f28a45"/><rect x="239" y="120" width="1" height="1" fill="#f28a45"/><rect x="239" y="125" width="1" height="1" fill="#f28a45"/>
<rect x="243" y="116" width="1" height="17" fill="#f28a45"/>
<rect x="242" y="126" width="3" height="3" fill="#f28a45"/>
<rect x="247" y="125" width="1" height="6" fill="#f28a45"/>
<rect x="246" y="129" width="3" height="2" fill="#f28a45"/>
<rect x="250" y="126" width="1" height="7" fill="#f28a45"/>
<rect x="249" y="129" width="3" height="2" fill="#f28a45"/>
<rect x="254" y="129" width="1" height="7" fill="#f28a45"/>
<rect x="253" y="132" width="3" height="2" fill="#f28a45"/>
<rect x="258" y="129" width="1" height="1" fill="#f28a45"/>
<rect x="258" y="132" width="1" height="9" fill="#f28a45"/>
<rect x="257" y="130" width="1" height="2" fill="#f28a45"/><rect x="259" y="130" width="1" height="2" fill="#f28a45"/><rect x="258" y="130" width="1" height="1" fill="#f28a45"/><rect x="258" y="131" width="1" height="1" fill="#f28a45"/>
<rect x="262" y="131" width="1" height="1" fill="#f28a45"/>
<rect x="262" y="135" width="1" height="7" fill="#f28a45"/>
<rect x="261" y="132" width="1" height="3" fill="#f28a45"/><rect x="263" y="132" width="1" height="3" fill="#f28a45"/><rect x="262" y="132" width="1" height="1" fill="#f28a45"/><rect x="262" y="134" width="1" height="1" fill="#f28a45"/>
<rect x="265" y="119" width="1" height="20" fill="#f28a45"/>
<rect x="264" y="120" width="3" height="14" fill="#f28a45"/>
<rect x="269" y="118" width="1" height="1" fill="#f28a45"/>
<rect x="269" y="128" width="1" height="2" fill="#f28a45"/>
<rect x="268" y="119" width="1" height="9" fill="#f28a45"/><rect x="270" y="119" width="1" height="9" fill="#f28a45"/><rect x="269" y="119" width="1" height="1" fill="#f28a45"/><rect x="269" y="127" width="1" height="1" fill="#f28a45"/>
<rect x="273" y="123" width="1" height="9" fill="#f28a45"/>
<rect x="272" y="130" width="3" height="2" fill="#f28a45"/>
<rect x="277" y="126" width="1" height="6" fill="#f28a45"/>
<rect x="276" y="128" width="3" height="2" fill="#f28a45"/>
<rect x="280" y="126" width="1" height="4" fill="#f28a45"/>
<rect x="280" y="137" width="1" height="1" fill="#f28a45"/>
<rect x="279" y="130" width="1" height="7" fill="#f28a45"/><rect x="281" y="130" width="1" height="7" fill="#f28a45"/><rect x="280" y="130" width="1" height="1" fill="#f28a45"/><rect x="280" y="136" width="1" height="1" fill="#f28a45"/>
<rect x="284" y="135" width="1" height="1" fill="#f28a45"/>
<rect x="284" y="140" width="1" height="2" fill="#f28a45"/>
<rect x="283" y="136" width="1" height="4" fill="#f28a45"/><rect x="285" y="136" width="1" height="4" fill="#f28a45"/><rect x="284" y="136" width="1" height="1" fill="#f28a45"/><rect x="284" y="139" width="1" height="1" fill="#f28a45"/>
<rect x="288" y="127" width="1" height="15" fill="#f28a45"/>
<rect x="287" y="137" width="3" height="3" fill="#f28a45"/>
<rect x="291" y="138" width="1" height="2" fill="#f28a45"/>
<rect x="290" y="140" width="1" height="9" fill="#f28a45"/><rect x="292" y="140" width="1" height="9" fill="#f28a45"/><rect x="291" y="140" width="1" height="1" fill="#f28a45"/><rect x="291" y="148" width="1" height="1" fill="#f28a45"/>
<rect x="295" y="140" width="1" height="3" fill="#f28a45"/>
<rect x="295" y="145" width="1" height="3" fill="#f28a45"/>
<rect x="294" y="143" width="1" height="2" fill="#f28a45"/><rect x="296" y="143" width="1" height="2" fill="#f28a45"/><rect x="295" y="143" width="1" height="1" fill="#f28a45"/><rect x="295" y="144" width="1" height="1" fill="#f28a45"/>
<rect x="299" y="143" width="1" height="2" fill="#f28a45"/>
<rect x="299" y="148" width="1" height="4" fill="#f28a45"/>
<rect x="298" y="145" width="1" height="3" fill="#f28a45"/><rect x="300" y="145" width="1" height="3" fill="#f28a45"/><rect x="299" y="145" width="1" height="1" fill="#f28a45"/><rect x="299" y="147" width="1" height="1" fill="#f28a45"/>
<rect x="303" y="138" width="1" height="13" fill="#f28a45"/>
<rect x="302" y="142" width="3" height="6" fill="#f28a45"/>
<rect x="306" y="130" width="1" height="18" fill="#f28a45"/>
<rect x="305" y="136" width="3" height="4" fill="#f28a45"/>
<rect x="310" y="129" width="1" height="3" fill="#f28a45"/>
<rect x="310" y="141" width="1" height="3" fill="#f28a45"/>
<rect x="309" y="132" width="1" height="9" fill="#f28a45"/><rect x="311" y="132" width="1" height="9" fill="#f28a45"/><rect x="310" y="132" width="1" height="1" fill="#f28a45"/><rect x="310" y="140" width="1" height="1" fill="#f28a45"/>
<rect x="314" y="138" width="1" height="6" fill="#f28a45"/>
<rect x="313" y="140" width="3" height="2" fill="#f28a45"/>
<rect x="318" y="138" width="1" height="6" fill="#f28a45"/>
<rect x="317" y="140" width="3" height="2" fill="#f28a45"/>
<rect x="321" y="131" width="1" height="9" fill="#f28a45"/>
<rect x="320" y="137" width="3" height="2" fill="#f28a45"/>
<rect x="325" y="127" width="1" height="9" fill="#f28a45"/>
<rect x="324" y="130" width="3" height="5" fill="#f28a45"/>
<rect x="329" y="128" width="1" height="1" fill="#f28a45"/>
<rect x="329" y="138" width="1" height="12" fill="#f28a45"/>
<rect x="328" y="129" width="1" height="9" fill="#f28a45"/><rect x="330" y="129" width="1" height="9" fill="#f28a45"/><rect x="329" y="129" width="1" height="1" fill="#f28a45"/><rect x="329" y="137" width="1" height="1" fill="#f28a45"/>
<rect x="332" y="138" width="1" height="13" fill="#f28a45"/>
<rect x="331" y="143" width="3" height="2" fill="#f28a45"/>
<rect x="336" y="139" width="1" height="3" fill="#f28a45"/>
<rect x="336" y="144" width="1" height="2" fill="#f28a45"/>
<rect x="335" y="142" width="1" height="2" fill="#f28a45"/><rect x="337" y="142" width="1" height="2" fill="#f28a45"/><rect x="336" y="142" width="1" height="1" fill="#f28a45"/><rect x="336" y="143" width="1" height="1" fill="#f28a45"/>
<rect x="340" y="137" width="1" height="9" fill="#f28a45"/>
<rect x="339" y="139" width="3" height="5" fill="#f28a45"/>
<rect x="344" y="134" width="1" height="7" fill="#f28a45"/>
<rect x="343" y="136" width="3" height="2" fill="#f28a45"/>
<rect x="347" y="122" width="1" height="14" fill="#f28a45"/>
<rect x="346" y="134" width="3" height="2" fill="#f28a45"/>
<rect x="351" y="129" width="1" height="4" fill="#f28a45"/>
<rect x="351" y="137" width="1" height="5" fill="#f28a45"/>
<rect x="350" y="133" width="1" height="4" fill="#f28a45"/><rect x="352" y="133" width="1" height="4" fill="#f28a45"/><rect x="351" y="133" width="1" height="1" fill="#f28a45"/><rect x="351" y="136" width="1" height="1" fill="#f28a45"/>
<rect x="355" y="133" width="1" height="4" fill="#f28a45"/>
<rect x="355" y="150" width="1" height="2" fill="#f28a45"/>
<rect x="354" y="137" width="1" height="13" fill="#f28a45"/><rect x="356" y="137" width="1" height="13" fill="#f28a45"/><rect x="355" y="137" width="1" height="1" fill="#f28a45"/><rect x="355" y="149" width="1" height="1" fill="#f28a45"/>
<rect x="359" y="139" width="1" height="1" fill="#f28a45"/>
<rect x="359" y="161" width="1" height="6" fill="#f28a45"/>
<rect x="358" y="140" width="1" height="21" fill="#f28a45"/><rect x="360" y="140" width="1" height="21" fill="#f28a45"/><rect x="359" y="140" width="1" height="1" fill="#f28a45"/><rect x="359" y="160" width="1" height="1" fill="#f28a45"/>
<rect x="362" y="159" width="1" height="2" fill="#f28a45"/>
<rect x="362" y="165" width="1" height="3" fill="#f28a45"/>
<rect x="361" y="161" width="1" height="4" fill="#f28a45"/><rect x="363" y="161" width="1" height="4" fill="#f28a45"/><rect x="362" y="161" width="1" height="1" fill="#f28a45"/><rect x="362" y="164" width="1" height="1" fill="#f28a45"/>
<rect x="366" y="159" width="1" height="11" fill="#f28a45"/>
<rect x="365" y="163" width="3" height="3" fill="#f28a45"/>
<rect x="370" y="153" width="1" height="12" fill="#f28a45"/>
<rect x="369" y="158" width="3" height="4" fill="#f28a45"/>
<rect x="373" y="157" width="1" height="1" fill="#f28a45"/>
<rect x="373" y="167" width="1" height="3" fill="#f28a45"/>
<rect x="372" y="158" width="1" height="9" fill="#f28a45"/><rect x="374" y="158" width="1" height="9" fill="#f28a45"/><rect x="373" y="158" width="1" height="1" fill="#f28a45"/><rect x="373" y="166" width="1" height="1" fill="#f28a45"/>
<rect x="377" y="150" width="1" height="17" fill="#f28a45"/>
<rect x="376" y="161" width="3" height="5" fill="#f28a45"/>
<rect x="381" y="160" width="1" height="1" fill="#f28a45"/>
<rect x="381" y="166" width="1" height="3" fill="#f28a45"/>
<rect x="380" y="161" width="1" height="5" fill="#f28a45"/><rect x="382" y="161" width="1" height="5" fill="#f28a45"/><rect x="381" y="161" width="1" height="1" fill="#f28a45"/><rect x="381" y="165" width="1" height="1" fill="#f28a45"/>
<rect x="385" y="160" width="1" height="2" fill="#f28a45"/>
<rect x="385" y="167" width="1" height="2" fill="#f28a45"/>
<rect x="384" y="162" width="1" height="5" fill="#f28a45"/><rect x="386" y="162" width="1" height="5" fill="#f28a45"/><rect x="385" y="162" width="1" height="1" fill="#f28a45"/><rect x="385" y="166" width="1" height="1" fill="#f28a45"/>
<rect x="388" y="162" width="1" height="8" fill="#f28a45"/>
<rect x="387" y="165" width="3" height="2" fill="#f28a45"/>
<rect x="392" y="160" width="1" height="10" fill="#f28a45"/>
<rect x="391" y="162" width="3" height="4" fill="#f28a45"/>
<rect x="396" y="156" width="1" height="13" fill="#f28a45"/>
<rect x="395" y="158" width="3" height="3" fill="#f28a45"/>
<rect x="399" y="142" width="1" height="20" fill="#f28a45"/>
<rect x="398" y="148" width="3" height="8" fill="#f28a45"/>
<rect x="403" y="141" width="1" height="9" fill="#f28a45"/>
<rect x="402" y="143" width="3" height="4" fill="#f28a45"/>
<rect x="407" y="144" width="1" height="4" fill="#f28a45"/>
<rect x="406" y="146" width="3" height="2" fill="#f28a45"/>
<rect x="411" y="140" width="1" height="8" fill="#f28a45"/>
<rect x="410" y="144" width="3" height="3" fill="#f28a45"/>
<rect x="414" y="140" width="1" height="2" fill="#f28a45"/>
<rect x="413" y="142" width="1" height="8" fill="#f28a45"/><rect x="415" y="142" width="1" height="8" fill="#f28a45"/><rect x="414" y="142" width="1" height="1" fill="#f28a45"/><rect x="414" y="149" width="1" height="1" fill="#f28a45"/>
<rect x="418" y="138" width="1" height="15" fill="#f28a45"/>
<rect x="417" y="143" width="3" height="7" fill="#f28a45"/>
<rect x="422" y="151" width="1" height="13" fill="#f28a45"/>
<rect x="421" y="142" width="1" height="9" fill="#f28a45"/><rect x="423" y="142" width="1" height="9" fill="#f28a45"/><rect x="422" y="142" width="1" height="1" fill="#f28a45"/><rect x="422" y="150" width="1" height="1" fill="#f28a45"/>
<rect x="426" y="151" width="1" height="1" fill="#f28a45"/>
<rect x="426" y="156" width="1" height="1" fill="#f28a45"/>
<rect x="425" y="152" width="1" height="4" fill="#f28a45"/><rect x="427" y="152" width="1" height="4" fill="#f28a45"/><rect x="426" y="152" width="1" height="1" fill="#f28a45"/><rect x="426" y="155" width="1" height="1" fill="#f28a45"/>
<rect x="429" y="148" width="1" height="12" fill="#f28a45"/>
<rect x="428" y="152" width="3" height="3" fill="#f28a45"/>
<rect x="433" y="139" width="1" height="14" fill="#f28a45"/>
<rect x="432" y="142" width="3" height="8" fill="#f28a45"/>
<rect x="437" y="134" width="1" height="10" fill="#f28a45"/>
<rect x="436" y="137" width="3" height="3" fill="#f28a45"/>
<rect x="440" y="132" width="1" height="4" fill="#f28a45"/>
<rect x="440" y="148" width="1" height="5" fill="#f28a45"/>
<rect x="439" y="136" width="1" height="12" fill="#f28a45"/><rect x="441" y="136" width="1" height="12" fill="#f28a45"/><rect x="440" y="136" width="1" height="1" fill="#f28a45"/><rect x="440" y="147" width="1" height="1" fill="#f28a45"/>
<rect x="444" y="140" width="1" height="15" fill="#f28a45"/>
<rect x="443" y="145" width="3" height="3" fill="#f28a45"/>
<rect x="448" y="142" width="1" height="5" fill="#f28a45"/>
<rect x="447" y="144" width="3" height="2" fill="#f28a45"/>
<rect x="452" y="140" width="1" height="4" fill="#f28a45"/>
<rect x="452" y="146" width="1" height="1" fill="#f28a45"/>
<rect x="451" y="144" width="1" height="2" fill="#f28a45"/><rect x="453" y="144" width="1" height="2" fill="#f28a45"/><rect x="452" y="144" width="1" height="1" fill="#f28a45"/><rect x="452" y="145" width="1" height="1" fill="#f28a45"/>
<rect x="455" y="143" width="1" height="1" fill="#f28a45"/>
<rect x="454" y="144" width="1" height="3" fill="#f28a45"/><rect x="456" y="144" width="1" height="3" fill="#f28a45"/><rect x="455" y="144" width="1" height="1" fill="#f28a45"/><rect x="455" y="146" width="1" height="1" fill="#f28a45"/>
<rect x="459" y="130" width="1" height="16" fill="#f28a45"/>
<rect x="458" y="136" width="3" height="9" fill="#f28a45"/>
<rect x="463" y="133" width="1" height="3" fill="#f28a45"/>
<rect x="463" y="146" width="1" height="1" fill="#f28a45"/>
<rect x="462" y="136" width="1" height="10" fill="#f28a45"/><rect x="464" y="136" width="1" height="10" fill="#f28a45"/><rect x="463" y="136" width="1" height="1" fill="#f28a45"/><rect x="463" y="145" width="1" height="1" fill="#f28a45"/>
<rect x="467" y="143" width="1" height="8" fill="#f28a45"/>
<rect x="466" y="146" width="3" height="2" fill="#f28a45"/>
<rect x="470" y="143" width="1" height="6" fill="#f28a45"/>
<rect x="469" y="146" width="3" height="2" fill="#f28a45"/>
<rect x="474" y="140" width="1" height="9" fill="#f28a45"/>
<rect x="473" y="144" width="3" height="2" fill="#f28a45"/>
<rect x="478" y="139" width="1" height="8" fill="#f28a45"/>
<rect x="477" y="142" width="3" height="2" fill="#f28a45"/>
<rect x="481" y="141" width="1" height="1" fill="#f28a45"/>
<rect x="481" y="158" width="1" height="4" fill="#f28a45"/>
<rect x="480" y="142" width="1" height="16" fill="#f28a45"/><rect x="482" y="142" width="1" height="16" fill="#f28a45"/><rect x="481" y="142" width="1" height="1" fill="#f28a45"/><rect x="481" y="157" width="1" height="1" fill="#f28a45"/>
<rect x="485" y="156" width="1" height="2" fill="#f28a45"/>
<rect x="485" y="165" width="1" height="5" fill="#f28a45"/>
<rect x="484" y="158" width="1" height="7" fill="#f28a45"/><rect x="486" y="158" width="1" height="7" fill="#f28a45"/><rect x="485" y="158" width="1" height="1" fill="#f28a45"/><rect x="485" y="164" width="1" height="1" fill="#f28a45"/>
<rect x="489" y="158" width="1" height="5" fill="#f28a45"/>
<rect x="489" y="173" width="1" height="1" fill="#f28a45"/>
<rect x="488" y="163" width="1" height="10" fill="#f28a45"/><rect x="490" y="163" width="1" height="10" fill="#f28a45"/><rect x="489" y="163" width="1" height="1" fill="#f28a45"/><rect x="489" y="172" width="1" height="1" fill="#f28a45"/>
<rect x="493" y="162" width="1" height="2" fill="#f28a45"/>
<rect x="493" y="173" width="1" height="1" fill="#f28a45"/>
<rect x="492" y="164" width="1" height="9" fill="#f28a45"/><rect x="494" y="164" width="1" height="9" fill="#f28a45"/><rect x="493" y="164" width="1" height="1" fill="#f28a45"/><rect x="493" y="172" width="1" height="1" fill="#f28a45"/>
<rect x="496" y="167" width="1" height="8" fill="#f28a45"/>
<rect x="495" y="170" width="3" height="2" fill="#f28a45"/>
<rect x="500" y="169" width="1" height="1" fill="#f28a45"/>
<rect x="500" y="172" width="1" height="2" fill="#f28a45"/>
<rect x="499" y="170" width="1" height="2" fill="#f28a45"/><rect x="501" y="170" width="1" height="2" fill="#f28a45"/><rect x="500" y="170" width="1" height="1" fill="#f28a45"/><rect x="500" y="171" width="1" height="1" fill="#f28a45"/>
<rect x="504" y="165" width="1" height="14" fill="#f28a45"/>
<rect x="503" y="171" width="3" height="2" fill="#f28a45"/>
<rect x="508" y="162" width="1" height="10" fill="#f28a45"/>
<rect x="508" y="190" width="1" height="7" fill="#f28a45"/>
<rect x="507" y="172" width="1" height="18" fill="#f28a45"/><rect x="509" y="172" width="1" height="18" fill="#f28a45"/><rect x="508" y="172" width="1" height="1" fill="#f28a45"/><rect x="508" y="189" width="1" height="1" fill="#f28a45"/>
<rect x="511" y="176" width="1" height="13" fill="#f28a45"/>
<rect x="511" y="197" width="1" height="6" fill="#f28a45"/>
<rect x="510" y="189" width="1" height="8" fill="#f28a45"/><rect x="512" y="189" width="1" height="8" fill="#f28a45"/><rect x="511" y="189" width="1" height="1" fill="#f28a45"/><rect x="511" y="196" width="1" height="1" fill="#f28a45"/>
<rect x="515" y="195" width="1" height="1" fill="#f28a45"/>
<rect x="515" y="205" width="1" height="1" fill="#f28a45"/>
<rect x="514" y="196" width="1" height="9" fill="#f28a45"/><rect x="516" y="196" width="1" height="9" fill="#f28a45"/><rect x="515" y="196" width="1" height="1" fill="#f28a45"/><rect x="515" y="204" width="1" height="1" fill="#f28a45"/>
<rect x="519" y="199" width="1" height="5" fill="#f28a45"/>
<rect x="518" y="201" width="3" height="2" fill="#f28a45"/>
<rect x="522" y="196" width="1" height="6" fill="#f28a45"/>
<rect x="521" y="198" width="3" height="2" fill="#f28a45"/>
<rect x="526" y="195" width="1" height="3" fill="#f28a45"/>
<rect x="526" y="205" width="1" height="3" fill="#f28a45"/>
<rect x="525" y="198" width="1" height="7" fill="#f28a45"/><rect x="527" y="198" width="1" height="7" fill="#f28a45"/><rect x="526" y="198" width="1" height="1" fill="#f28a45"/><rect x="526" y="204" width="1" height="1" fill="#f28a45"/>
<rect x="530" y="198" width="1" height="6" fill="#f28a45"/>
<rect x="530" y="211" width="1" height="1" fill="#f28a45"/>
<rect x="529" y="204" width="1" height="7" fill="#f28a45"/><rect x="531" y="204" width="1" height="7" fill="#f28a45"/><rect x="530" y="204" width="1" height="1" fill="#f28a45"/><rect x="530" y="210" width="1" height="1" fill="#f28a45"/>
<rect x="534" y="202" width="1" height="4" fill="#f28a45"/>
<rect x="534" y="212" width="1" height="2" fill="#f28a45"/>
<rect x="533" y="206" width="1" height="6" fill="#f28a45"/><rect x="535" y="206" width="1" height="6" fill="#f28a45"/><rect x="534" y="206" width="1" height="1" fill="#f28a45"/><rect x="534" y="211" width="1" height="1" fill="#f28a45"/>
<rect x="537" y="198" width="1" height="9" fill="#f28a45"/>
<rect x="536" y="200" width="3" height="5" fill="#f28a45"/>
<rect x="541" y="196" width="1" height="4" fill="#f28a45"/>
<rect x="541" y="203" width="1" height="2" fill="#f28a45"/>
<rect x="540" y="200" width="1" height="3" fill="#f28a45"/><rect x="542" y="200" width="1" height="3" fill="#f28a45"/><rect x="541" y="200" width="1" height="1" fill="#f28a45"/><rect x="541" y="202" width="1" height="1" fill="#f28a45"/>
<rect x="545" y="199" width="1" height="1" fill="#f28a45"/>
<rect x="545" y="205" width="1" height="1" fill="#f28a45"/>
<rect x="544" y="200" width="1" height="5" fill="#f28a45"/><rect x="546" y="200" width="1" height="5" fill="#f28a45"/><rect x="545" y="200" width="1" height="1" fill="#f28a45"/><rect x="545" y="204" width="1" height="1" fill="#f28a45"/>
<rect x="548" y="190" width="1" height="14" fill="#f28a45"/>
<rect x="547" y="198" width="3" height="6" fill="#f28a45"/>
<rect x="552" y="192" width="1" height="10" fill="#f28a45"/>
<rect x="551" y="196" width="3" height="2" fill="#f28a45"/>
<rect x="556" y="190" width="1" height="15" fill="#f28a45"/>
<rect x="555" y="192" width="3" height="4" fill="#f28a45"/>
<rect x="560" y="186" width="1" height="11" fill="#f28a45"/>
<rect x="559" y="190" width="3" height="2" fill="#f28a45"/>
<rect x="563" y="183" width="1" height="10" fill="#f28a45"/>
<rect x="562" y="186" width="3" height="4" fill="#f28a45"/>
<rect x="567" y="179" width="1" height="11" fill="#f28a45"/>
<rect x="566" y="181" width="3" height="5" fill="#f28a45"/>
<rect x="571" y="179" width="1" height="1" fill="#f28a45"/>
<rect x="571" y="187" width="1" height="4" fill="#f28a45"/>
<rect x="570" y="180" width="1" height="7" fill="#f28a45"/><rect x="572" y="180" width="1" height="7" fill="#f28a45"/><rect x="571" y="180" width="1" height="1" fill="#f28a45"/><rect x="571" y="186" width="1" height="1" fill="#f28a45"/>
<rect x="575" y="168" width="1" height="12" fill="#f28a45"/>
<rect x="575" y="186" width="1" height="6" fill="#f28a45"/>
<rect x="574" y="180" width="1" height="6" fill="#f28a45"/><rect x="576" y="180" width="1" height="6" fill="#f28a45"/><rect x="575" y="180" width="1" height="1" fill="#f28a45"/><rect x="575" y="185" width="1" height="1" fill="#f28a45"/>
<rect x="578" y="162" width="1" height="31" fill="#f28a45"/>
<rect x="577" y="164" width="3" height="19" fill="#f28a45"/>
<rect x="582" y="162" width="1" height="1" fill="#f28a45"/>
<rect x="582" y="166" width="1" height="4" fill="#f28a45"/>
<rect x="581" y="163" width="1" height="3" fill="#f28a45"/><rect x="583" y="163" width="1" height="3" fill="#f28a45"/><rect x="582" y="163" width="1" height="1" fill="#f28a45"/><rect x="582" y="165" width="1" height="1" fill="#f28a45"/>
<rect x="586" y="163" width="1" height="1" fill="#f28a45"/>
<rect x="586" y="168" width="1" height="2" fill="#f28a45"/>
<rect x="585" y="164" width="1" height="4" fill="#f28a45"/><rect x="587" y="164" width="1" height="4" fill="#f28a45"/><rect x="586" y="164" width="1" height="1" fill="#f28a45"/><rect x="586" y="167" width="1" height="1" fill="#f28a45"/>
<rect x="589" y="164" width="1" height="6" fill="#f28a45"/>
<rect x="588" y="166" width="3" height="2" fill="#f28a45"/>
<rect x="593" y="163" width="1" height="13" fill="#f28a45"/>
<rect x="592" y="166" width="3" height="2" fill="#f28a45"/>
<rect x="597" y="165" width="1" height="2" fill="#f28a45"/>
<rect x="597" y="175" width="1" height="1" fill="#f28a45"/>
<rect x="596" y="167" width="1" height="8" fill="#f28a45"/><rect x="598" y="167" width="1" height="8" fill="#f28a45"/><rect x="597" y="167" width="1" height="1" fill="#f28a45"/><rect x="597" y="174" width="1" height="1" fill="#f28a45"/>
<rect x="601" y="168" width="1" height="3" fill="#f28a45"/>
<rect x="601" y="178" width="1" height="5" fill="#f28a45"/>
<rect x="600" y="171" width="1" height="7" fill="#f28a45"/><rect x="602" y="171" width="1" height="7" fill="#f28a45"/><rect x="601" y="171" width="1" height="1" fill="#f28a45"/><rect x="601" y="177" width="1" height="1" fill="#f28a45"/>
<rect x="604" y="174" width="1" height="9" fill="#f28a45"/>
<rect x="603" y="176" width="3" height="2" fill="#f28a45"/>
<rect x="608" y="174" width="1" height="8" fill="#f28a45"/>
<rect x="607" y="176" width="3" height="2" fill="#f28a45"/>
<rect x="612" y="175" width="1" height="7" fill="#f28a45"/>
<rect x="611" y="178" width="3" height="2" fill="#f28a45"/>
<rect x="616" y="180" width="1" height="2" fill="#f28a45"/>
<rect x="616" y="196" width="1" height="1" fill="#f28a45"/>
<rect x="615" y="182" width="1" height="14" fill="#f28a45"/><rect x="617" y="182" width="1" height="14" fill="#f28a45"/><rect x="616" y="182" width="1" height="1" fill="#f28a45"/><rect x="616" y="195" width="1" height="1" fill="#f28a45"/>
<rect x="619" y="183" width="1" height="13" fill="#f28a45"/>
<rect x="618" y="191" width="3" height="3" fill="#f28a45"/>
<rect x="623" y="187" width="1" height="3" fill="#f28a45"/>
<rect x="623" y="196" width="1" height="2" fill="#f28a45"/>
<rect x="622" y="190" width="1" height="6" fill="#f28a45"/><rect x="624" y="190" width="1" height="6" fill="#f28a45"/><rect x="623" y="190" width="1" height="1" fill="#f28a45"/><rect x="623" y="195" width="1" height="1" fill="#f28a45"/>
<rect x="627" y="191" width="1" height="2" fill="#f28a45"/>
<rect x="626" y="193" width="1" height="8" fill="#f28a45"/><rect x="628" y="193" width="1" height="8" fill="#f28a45"/><rect x="627" y="193" width="1" height="1" fill="#f28a45"/><rect x="627" y="200" width="1" height="1" fill="#f28a45"/>
<rect x="630" y="194" width="1" height="5" fill="#f28a45"/>
<rect x="629" y="196" width="3" height="2" fill="#f28a45"/>
<rect x="634" y="191" width="1" height="7" fill="#f28a45"/>
<rect x="633" y="194" width="3" height="2" fill="#f28a45"/>
<rect x="638" y="191" width="1" height="3" fill="#f28a45"/>
<rect x="638" y="198" width="1" height="4" fill="#f28a45"/>
<rect x="637" y="194" width="1" height="4" fill="#f28a45"/><rect x="639" y="194" width="1" height="4" fill="#f28a45"/><rect x="638" y="194" width="1" height="1" fill="#f28a45"/><rect x="638" y="197" width="1" height="1" fill="#f28a45"/>
<rect x="642" y="195" width="1" height="1" fill="#f28a45"/>
<rect x="642" y="199" width="1" height="7" fill="#f28a45"/>
<rect x="641" y="196" width="1" height="3" fill="#f28a45"/><rect x="643" y="196" width="1" height="3" fill="#f28a45"/><rect x="642" y="196" width="1" height="1" fill="#f28a45"/><rect x="642" y="198" width="1" height="1" fill="#f28a45"/>
<rect x="645" y="194" width="1" height="9" fill="#f28a45"/>
<rect x="644" y="197" width="3" height="2" fill="#f28a45"/>
<rect x="649" y="190" width="1" height="8" fill="#f28a45"/>
<rect x="648" y="190" width="3" height="6" fill="#f28a45"/>
<rect x="653" y="190" width="1" height="1" fill="#f28a45"/>
<rect x="653" y="195" width="1" height="3" fill="#f28a45"/>
<rect x="652" y="191" width="1" height="4" fill="#f28a45"/><rect x="654" y="191" width="1" height="4" fill="#f28a45"/><rect x="653" y="191" width="1" height="1" fill="#f28a45"/><rect x="653" y="194" width="1" height="1" fill="#f28a45"/>
<rect x="657" y="190" width="1" height="1" fill="#f28a45"/>
<rect x="657" y="198" width="1" height="1" fill="#f28a45"/>
<rect x="656" y="191" width="1" height="7" fill="#f28a45"/><rect x="658" y="191" width="1" height="7" fill="#f28a45"/><rect x="657" y="191" width="1" height="1" fill="#f28a45"/><rect x="657" y="197" width="1" height="1" fill="#f28a45"/>
<rect x="660" y="194" width="1" height="2" fill="#f28a45"/>
<rect x="660" y="220" width="1" height="2" fill="#f28a45"/>
<rect x="659" y="196" width="1" height="24" fill="#f28a45"/><rect x="661" y="196" width="1" height="24" fill="#f28a45"/><rect x="660" y="196" width="1" height="1" fill="#f28a45"/><rect x="660" y="219" width="1" height="1" fill="#f28a45"/>
<rect x="664" y="210" width="1" height="12" fill="#f28a45"/>
<rect x="663" y="215" width="3" height="2" fill="#f28a45"/>
<rect x="668" y="211" width="1" height="11" fill="#f28a45"/>
<rect x="667" y="215" width="3" height="3" fill="#f28a45"/>
<rect x="671" y="213" width="1" height="9" fill="#f28a45"/>
<rect x="670" y="216" width="3" height="2" fill="#f28a45"/>
<rect x="675" y="214" width="1" height="7" fill="#f28a45"/>
<rect x="674" y="216" width="3" height="2" fill="#f28a45"/>
<rect x="679" y="211" width="1" height="4" fill="#f28a45"/>
<rect x="679" y="219" width="1" height="1" fill="#f28a45"/>
<rect x="678" y="215" width="1" height="4" fill="#f28a45"/><rect x="680" y="215" width="1" height="4" fill="#f28a45"/><rect x="679" y="215" width="1" height="1" fill="#f28a45"/><rect x="679" y="218" width="1" height="1" fill="#f28a45"/>
<rect x="683" y="198" width="1" height="23" fill="#f28a45"/>
<rect x="682" y="204" width="3" height="13" fill="#f28a45"/>
<rect x="686" y="190" width="1" height="17" fill="#f28a45"/>
<rect x="685" y="196" width="3" height="8" fill="#f28a45"/>
<rect x="690" y="195" width="1" height="1" fill="#f28a45"/>
<rect x="690" y="202" width="1" height="6" fill="#f28a45"/>
<rect x="689" y="196" width="1" height="6" fill="#f28a45"/><rect x="691" y="196" width="1" height="6" fill="#f28a45"/><rect x="690" y="196" width="1" height="1" fill="#f28a45"/><rect x="690" y="201" width="1" height="1" fill="#f28a45"/>
<rect x="694" y="183" width="1" height="21" fill="#f28a45"/>
<rect x="693" y="188" width="3" height="14" fill="#f28a45"/>
<rect x="697" y="184" width="1" height="11" fill="#f28a45"/>
<rect x="696" y="187" width="3" height="3" fill="#f28a45"/>
<rect x="701" y="183" width="1" height="8" fill="#f28a45"/>
<rect x="700" y="187" width="3" height="3" fill="#f28a45"/>
<rect x="705" y="185" width="1" height="22" fill="#f28a45"/>
<rect x="704" y="187" width="3" height="2" fill="#f28a45"/>
<rect x="709" y="196" width="1" height="2" fill="#f28a45"/>
<rect x="709" y="202" width="1" height="3" fill="#f28a45"/>
<rect x="708" y="198" width="1" height="4" fill="#f28a45"/><rect x="710" y="198" width="1" height="4" fill="#f28a45"/><rect x="709" y="198" width="1" height="1" fill="#f28a45"/><rect x="709" y="201" width="1" height="1" fill="#f28a45"/>
<rect x="712" y="201" width="1" height="1" fill="#f28a45"/>
<rect x="712" y="212" width="1" height="2" fill="#f28a45"/>
<rect x="711" y="202" width="1" height="10" fill="#f28a45"/><rect x="713" y="202" width="1" height="10" fill="#f28a45"/><rect x="712" y="202" width="1" height="1" fill="#f28a45"/><rect x="712" y="211" width="1" height="1" fill="#f28a45"/>
<rect x="716" y="209" width="1" height="2" fill="#f28a45"/>
<rect x="716" y="218" width="1" height="1" fill="#f28a45"/>
<rect x="715" y="211" width="1" height="7" fill="#f28a45"/><rect x="717" y="211" width="1" height="7" fill="#f28a45"/><rect x="716" y="211" width="1" height="1" fill="#f28a45"/><rect x="716" y="217" width="1" height="1" fill="#f28a45"/>
<rect x="720" y="214" width="1" height="3" fill="#f28a45"/>
<rect x="719" y="217" width="1" height="4" fill="#f28a45"/><rect x="721" y="217" width="1" height="4" fill="#f28a45"/><rect x="720" y="217" width="1" height="1" fill="#f28a45"/><rect x="720" y="220" width="1" height="1" fill="#f28a45"/>
<rect x="724" y="215" width="1" height="2" fill="#f28a45"/>
<rect x="723" y="217" width="1" height="4" fill="#f28a45"/><rect x="725" y="217" width="1" height="4" fill="#f28a45"/><rect x="724" y="217" width="1" height="1" fill="#f28a45"/><rect x="724" y="220" width="1" height="1" fill="#f28a45"/>
<rect x="727" y="216" width="1" height="12" fill="#f28a45"/>
<rect x="726" y="219" width="3" height="2" fill="#f28a45"/>
<rect x="731" y="208" width="1" height="19" fill="#f28a45"/>
<rect x="730" y="216" width="3" height="2" fill="#f28a45"/>
<rect x="735" y="204" width="1" height="14" fill="#f28a45"/>
<rect x="734" y="210" width="3" height="4" fill="#f28a45"/>
<rect x="738" y="209" width="1" height="1" fill="#f28a45"/>
<rect x="738" y="219" width="1" height="1" fill="#f28a45"/>
<rect x="737" y="210" width="1" height="9" fill="#f28a45"/><rect x="739" y="210" width="1" height="9" fill="#f28a45"/><rect x="738" y="210" width="1" height="1" fill="#f28a45"/><rect x="738" y="218" width="1" height="1" fill="#f28a45"/>
<rect x="742" y="214" width="1" height="5" fill="#f28a45"/>
<rect x="741" y="215" width="3" height="2" fill="#f28a45"/>
<rect x="746" y="212" width="1" height="6" fill="#f28a45"/>
<rect x="745" y="214" width="3" height="2" fill="#f28a45"/>
<rect x="750" y="203" width="1" height="17" fill="#f28a45"/>
<rect x="749" y="211" width="3" height="2" fill="#f28a45"/>
<rect x="753" y="209" width="1" height="1" fill="#f28a45"/>
<rect x="753" y="218" width="1" height="2" fill="#f28a45"/>
<rect x="752" y="210" width="1" height="8" fill="#f28a45"/><rect x="754" y="210" width="1" height="8" fill="#f28a45"/><rect x="753" y="210" width="1" height="1" fill="#f28a45"/><rect x="753" y="217" width="1" height="1" fill="#f28a45"/>
<rect x="757" y="213" width="1" height="4" fill="#f28a45"/>
<rect x="757" y="219" width="1" height="7" fill="#f28a45"/>
<rect x="756" y="217" width="1" height="2" fill="#f28a45"/><rect x="758" y="217" width="1" height="2" fill="#f28a45"/><rect x="757" y="217" width="1" height="1" fill="#f28a45"/><rect x="757" y="218" width="1" height="1" fill="#f28a45"/>
<rect x="761" y="217" width="1" height="4" fill="#f28a45"/>
<rect x="760" y="219" width="3" height="2" fill="#f28a45"/>
<rect x="765" y="217" width="1" height="5" fill="#f28a45"/>
<rect x="764" y="220" width="3" height="2" fill="#f28a45"/>
<rect x="768" y="220" width="1" height="5" fill="#f28a45"/>
<rect x="767" y="222" width="3" height="2" fill="#f28a45"/>
<rect x="772" y="218" width="1" height="5" fill="#f28a45"/>
<rect x="772" y="236" width="1" height="1" fill="#f28a45"/>
<rect x="771" y="223" width="1" height="13" fill="#f28a45"/><rect x="773" y="223" width="1" height="13" fill="#f28a45"/><rect x="772" y="223" width="1" height="1" fill="#f28a45"/><rect x="772" y="235" width="1" height="1" fill="#f28a45"/>
<rect x="776" y="220" width="1" height="2" fill="#f28a45"/>
<rect x="776" y="234" width="1" height="3" fill="#f28a45"/>
<rect x="775" y="222" width="1" height="12" fill="#f28a45"/><rect x="777" y="222" width="1" height="12" fill="#f28a45"/><rect x="776" y="222" width="1" height="1" fill="#f28a45"/><rect x="776" y="233" width="1" height="1" fill="#f28a45"/>
<rect x="779" y="216" width="1" height="12" fill="#f28a45"/>
<rect x="778" y="221" width="3" height="2" fill="#f28a45"/>
<rect x="783" y="220" width="1" height="1" fill="#f28a45"/>
<rect x="783" y="228" width="1" height="1" fill="#f28a45"/>
<rect x="782" y="221" width="1" height="7" fill="#f28a45"/><rect x="784" y="221" width="1" height="7" fill="#f28a45"/><rect x="783" y="221" width="1" height="1" fill="#f28a45"/><rect x="783" y="227" width="1" height="1" fill="#f28a45"/>
<rect x="787" y="220" width="1" height="9" fill="#f28a45"/>
<rect x="786" y="224" width="3" height="2" fill="#f28a45"/>
<rect x="791" y="225" width="1" height="1" fill="#f28a45"/>
<rect x="791" y="230" width="1" height="2" fill="#f28a45"/>
<rect x="790" y="226" width="1" height="4" fill="#f28a45"/><rect x="792" y="226" width="1" height="4" fill="#f28a45"/><rect x="791" y="226" width="1" height="1" fill="#f28a45"/><rect x="791" y="229" width="1" height="1" fill="#f28a45"/>
<rect x="794" y="222" width="1" height="10" fill="#f28a45"/>
<rect x="793" y="226" width="3" height="2" fill="#f28a45"/>
<rect x="798" y="216" width="1" height="17" fill="#f28a45"/>
<rect x="797" y="222" width="3" height="6" fill="#f28a45"/>
<rect x="802" y="212" width="1" height="3" fill="#f28a45"/>
<rect x="802" y="222" width="1" height="8" fill="#f28a45"/>
<rect x="801" y="215" width="1" height="7" fill="#f28a45"/><rect x="803" y="215" width="1" height="7" fill="#f28a45"/><rect x="802" y="215" width="1" height="1" fill="#f28a45"/><rect x="802" y="221" width="1" height="1" fill="#f28a45"/>
<rect x="806" y="211" width="1" height="9" fill="#f28a45"/>
<rect x="805" y="215" width="3" height="2" fill="#f28a45"/>
<rect x="809" y="210" width="1" height="8" fill="#f28a45"/>
<rect x="808" y="214" width="3" height="2" fill="#f28a45"/>
<rect x="813" y="211" width="1" height="3" fill="#f28a45"/>
<rect x="813" y="218" width="1" height="3" fill="#f28a45"/>
<rect x="812" y="214" width="1" height="4" fill="#f28a45"/><rect x="814" y="214" width="1" height="4" fill="#f28a45"/><rect x="813" y="214" width="1" height="1" fill="#f28a45"/><rect x="813" y="217" width="1" height="1" fill="#f28a45"/>
<rect x="817" y="211" width="1" height="13" fill="#f28a45"/>
<rect x="816" y="214" width="3" height="4" fill="#f28a45"/>
<rect x="820" y="203" width="1" height="14" fill="#f28a45"/>
<rect x="819" y="206" width="3" height="3" fill="#f28a45"/>
<rect x="824" y="200" width="1" height="5" fill="#f28a45"/>
<rect x="824" y="218" width="1" height="3" fill="#f28a45"/>
<rect x="823" y="205" width="1" height="13" fill="#f28a45"/><rect x="825" y="205" width="1" height="13" fill="#f28a45"/><rect x="824" y="205" width="1" height="1" fill="#f28a45"/><rect x="824" y="217" width="1" height="1" fill="#f28a45"/>
<rect x="828" y="214" width="1" height="8" fill="#f28a45"/>
<rect x="827" y="217" width="3" height="2" fill="#f28a45"/>
<rect x="832" y="214" width="1" height="3" fill="#f28a45"/>
<rect x="832" y="219" width="1" height="2" fill="#f28a45"/>
<rect x="831" y="217" width="1" height="2" fill="#f28a45"/><rect x="833" y="217" width="1" height="2" fill="#f28a45"/><rect x="832" y="217" width="1" height="1" fill="#f28a45"/><rect x="832" y="218" width="1" height="1" fill="#f28a45"/>
<rect x="835" y="213" width="1" height="6" fill="#f28a45"/>
<rect x="834" y="216" width="3" height="2" fill="#f28a45"/>
<rect x="839" y="208" width="1" height="11" fill="#f28a45"/>
<rect x="838" y="213" width="3" height="2" fill="#f28a45"/>
<rect x="843" y="191" width="1" height="23" fill="#f28a45"/>
<rect x="842" y="193" width="3" height="21" fill="#f28a45"/>
<rect x="846" y="191" width="1" height="1" fill="#f28a45"/>
<rect x="846" y="209" width="1" height="2" fill="#f28a45"/>
<rect x="845" y="192" width="1" height="17" fill="#f28a45"/><rect x="847" y="192" width="1" height="17" fill="#f28a45"/><rect x="846" y="192" width="1" height="1" fill="#f28a45"/><rect x="846" y="208" width="1" height="1" fill="#f28a45"/>
<rect x="850" y="204" width="1" height="8" fill="#f28a45"/>
<rect x="849" y="206" width="3" height="2" fill="#f28a45"/>
<rect x="854" y="202" width="1" height="6" fill="#f28a45"/>
<rect x="853" y="205" width="3" height="2" fill="#f28a45"/>
<rect x="858" y="204" width="1" height="3" fill="#f28a45"/>
<rect x="858" y="209" width="1" height="3" fill="#f28a45"/>
<rect x="857" y="207" width="1" height="2" fill="#f28a45"/><rect x="859" y="207" width="1" height="2" fill="#f28a45"/><rect x="858" y="207" width="1" height="1" fill="#f28a45"/><rect x="858" y="208" width="1" height="1" fill="#f28a45"/>
<rect x="861" y="199" width="1" height="10" fill="#f28a45"/>
<rect x="860" y="207" width="3" height="2" fill="#f28a45"/>
<rect x="865" y="200" width="1" height="9" fill="#f28a45"/>
<rect x="864" y="205" width="3" height="2" fill="#f28a45"/>
<rect x="869" y="200" width="1" height="4" fill="#f28a45"/>
<rect x="869" y="208" width="1" height="6" fill="#f28a45"/>
<rect x="868" y="204" width="1" height="4" fill="#f28a45"/><rect x="870" y="204" width="1" height="4" fill="#f28a45"/><rect x="869" y="204" width="1" height="1" fill="#f28a45"/><rect x="869" y="207" width="1" height="1" fill="#f28a45"/>
<rect x="873" y="211" width="1" height="3" fill="#f28a45"/>
<rect x="872" y="212" width="3" height="2" fill="#f28a45"/>
<rect x="876" y="212" width="1" height="1" fill="#f28a45"/>
<rect x="875" y="212" width="3" height="2" fill="#f28a45"/>
<rect x="880" y="209" width="1" height="6" fill="#f28a45"/>
<rect x="879" y="211" width="3" height="2" fill="#f28a45"/>
<rect x="884" y="208" width="1" height="4" fill="#f28a45"/>
<rect x="883" y="210" width="3" height="2" fill="#f28a45"/>
</g>
<polyline points="14.0,48.0 30.0,56.0 41.0,62.0 52.9,71.2 60.4,73.4 70.2,78.2 78.8,80.4 91.8,86.3 103.6,89.0 110.0,92.6 126.2,100.1 142.4,100.7 164.0,101.2 174.8,105.0 187.8,107.1 194.2,114.2 207.2,119.6 218.0,125.0 225.0,126.5 235.8,126.5 256.3,127.0 262.8,128.1 281.2,129.2 295.2,134.6 302.8,136.7 314.6,136.7 333.0,137.3 340.0,138.2 347.6,136.6 353.0,137.1 359.4,140.4 372.4,147.4 385.4,152.8 395.0,155.0 402.6,152.8 415.6,151.2 431.8,150.1 442.6,149.0 460.0,147.9 481.4,147.2 496.7,154.2 507.8,161.8 517.5,169.4 530.0,178.5 543.9,186.1 552.2,188.9 566.1,188.9 575.0,186.8 584.8,182.1 594.7,179.0 612.0,179.6 623.1,182.7 640.4,187.0 656.4,189.5 666.3,196.9 681.1,202.5 695.8,198.2 709.8,198.8 722.8,205.8 739.0,208.5 754.1,209.6 771.4,215.0 787.6,219.3 808.9,218.9 820.0,217.0 832.0,217.0 843.1,215.2 855.2,213.3 864.4,211.5 883.0,211.0" fill="none" stroke="#1818c4" stroke-width="1.45"/>
</g>
<g clip-path="url(#cp2)">
<g shape-rendering="crispEdges">
<rect x="16" y="275" width="2" height="11" fill="#c42424"/>
<rect x="20" y="275" width="2" height="9" fill="#c42424"/>
<rect x="23" y="275" width="2" height="7" fill="#c42424"/>
<rect x="27" y="275" width="2" height="6" fill="#c42424"/>
<rect x="31" y="275" width="2" height="5" fill="#c42424"/>
<rect x="34" y="275" width="2" height="5" fill="#c42424"/>
<rect x="38" y="275" width="2" height="5" fill="#c42424"/>
<rect x="42" y="275" width="2" height="5" fill="#c42424"/>
<rect x="46" y="275" width="2" height="5" fill="#c42424"/>
<rect x="49" y="275" width="2" height="4" fill="#c42424"/>
<rect x="53" y="275" width="2" height="2" fill="#c42424"/>
<rect x="68" y="272" width="2" height="2" fill="#c42424"/>
<rect x="72" y="271" width="2" height="3" fill="#c42424"/>
<rect x="75" y="271" width="2" height="3" fill="#c42424"/>
<rect x="79" y="271" width="2" height="3" fill="#c42424"/>
<rect x="83" y="272" width="2" height="2" fill="#c42424"/>
<rect x="87" y="273" width="2" height="1" fill="#c42424"/>
<rect x="94" y="273" width="2" height="1" fill="#c42424"/>
<rect x="98" y="271" width="2" height="3" fill="#c42424"/>
<rect x="101" y="271" width="2" height="3" fill="#c42424"/>
<rect x="105" y="273" width="2" height="1" fill="#c42424"/>
<rect x="128" y="273" width="2" height="1" fill="#c42424"/>
<rect x="131" y="272" width="2" height="2" fill="#c42424"/>
<rect x="135" y="270" width="2" height="4" fill="#c42424"/>
<rect x="139" y="269" width="2" height="5" fill="#c42424"/>
<rect x="142" y="268" width="2" height="6" fill="#c42424"/>
<rect x="146" y="267" width="2" height="7" fill="#c42424"/>
<rect x="150" y="267" width="2" height="7" fill="#c42424"/>
<rect x="154" y="268" width="2" height="6" fill="#c42424"/>
<rect x="157" y="269" width="2" height="5" fill="#c42424"/>
<rect x="161" y="271" width="2" height="3" fill="#c42424"/>
<rect x="165" y="270" width="2" height="4" fill="#c42424"/>
<rect x="169" y="273" width="2" height="1" fill="#c42424"/>
<rect x="187" y="275" width="2" height="1" fill="#c42424"/>
<rect x="191" y="275" width="2" height="4" fill="#c42424"/>
<rect x="195" y="275" width="2" height="6" fill="#c42424"/>
<rect x="198" y="275" width="2" height="6" fill="#c42424"/>
<rect x="202" y="275" width="2" height="5" fill="#c42424"/>
<rect x="206" y="275" width="2" height="4" fill="#c42424"/>
<rect x="210" y="275" width="2" height="3" fill="#c42424"/>
<rect x="213" y="275" width="2" height="2" fill="#c42424"/>
<rect x="228" y="273" width="2" height="1" fill="#c42424"/>
<rect x="232" y="272" width="2" height="2" fill="#c42424"/>
<rect x="236" y="270" width="2" height="4" fill="#c42424"/>
<rect x="239" y="269" width="2" height="5" fill="#c42424"/>
<rect x="243" y="270" width="2" height="4" fill="#c42424"/>
<rect x="247" y="270" width="2" height="4" fill="#c42424"/>
<rect x="250" y="270" width="2" height="4" fill="#c42424"/>
<rect x="254" y="272" width="2" height="2" fill="#c42424"/>
<rect x="258" y="272" width="2" height="2" fill="#c42424"/>
<rect x="262" y="271" width="2" height="3" fill="#c42424"/>
<rect x="265" y="271" width="2" height="3" fill="#c42424"/>
<rect x="269" y="271" width="2" height="3" fill="#c42424"/>
<rect x="273" y="273" width="2" height="1" fill="#c42424"/>
<rect x="277" y="272" width="2" height="2" fill="#c42424"/>
<rect x="280" y="273" width="2" height="1" fill="#c42424"/>
<rect x="291" y="275" width="2" height="1" fill="#c42424"/>
<rect x="295" y="275" width="2" height="1" fill="#c42424"/>
<rect x="299" y="275" width="2" height="1" fill="#c42424"/>
<rect x="310" y="273" width="2" height="1" fill="#c42424"/>
<rect x="314" y="273" width="2" height="1" fill="#c42424"/>
<rect x="318" y="273" width="2" height="1" fill="#c42424"/>
<rect x="321" y="272" width="2" height="2" fill="#c42424"/>
<rect x="325" y="272" width="2" height="2" fill="#c42424"/>
<rect x="329" y="272" width="2" height="2" fill="#c42424"/>
<rect x="332" y="272" width="2" height="2" fill="#c42424"/>
<rect x="336" y="272" width="2" height="2" fill="#c42424"/>
<rect x="340" y="272" width="2" height="2" fill="#c42424"/>
<rect x="344" y="273" width="2" height="1" fill="#c42424"/>
<rect x="347" y="273" width="2" height="1" fill="#c42424"/>
<rect x="351" y="273" width="2" height="1" fill="#c42424"/>
<rect x="362" y="275" width="2" height="5" fill="#c42424"/>
<rect x="366" y="275" width="2" height="5" fill="#c42424"/>
<rect x="370" y="275" width="2" height="5" fill="#c42424"/>
<rect x="373" y="275" width="2" height="5" fill="#c42424"/>
<rect x="377" y="275" width="2" height="5" fill="#c42424"/>
<rect x="381" y="275" width="2" height="5" fill="#c42424"/>
<rect x="385" y="275" width="2" height="5" fill="#c42424"/>
<rect x="388" y="275" width="2" height="5" fill="#c42424"/>
<rect x="392" y="275" width="2" height="2" fill="#c42424"/>
<rect x="399" y="271" width="2" height="3" fill="#c42424"/>
<rect x="403" y="269" width="2" height="5" fill="#c42424"/>
<rect x="407" y="268" width="2" height="6" fill="#c42424"/>
<rect x="411" y="267" width="2" height="7" fill="#c42424"/>
<rect x="414" y="268" width="2" height="6" fill="#c42424"/>
<rect x="418" y="269" width="2" height="5" fill="#c42424"/>
<rect x="422" y="270" width="2" height="4" fill="#c42424"/>
<rect x="426" y="271" width="2" height="3" fill="#c42424"/>
<rect x="429" y="271" width="2" height="3" fill="#c42424"/>
<rect x="433" y="271" width="2" height="3" fill="#c42424"/>
<rect x="437" y="271" width="2" height="3" fill="#c42424"/>
<rect x="440" y="272" width="2" height="2" fill="#c42424"/>
<rect x="444" y="273" width="2" height="1" fill="#c42424"/>
<rect x="448" y="273" width="2" height="1" fill="#c42424"/>
<rect x="452" y="273" width="2" height="1" fill="#c42424"/>
<rect x="455" y="273" width="2" height="1" fill="#c42424"/>
<rect x="459" y="273" width="2" height="1" fill="#c42424"/>
<rect x="463" y="273" width="2" height="1" fill="#c42424"/>
<rect x="467" y="273" width="2" height="1" fill="#c42424"/>
<rect x="470" y="273" width="2" height="1" fill="#c42424"/>
<rect x="474" y="273" width="2" height="1" fill="#c42424"/>
<rect x="485" y="275" width="2" height="3" fill="#c42424"/>
<rect x="489" y="275" width="2" height="5" fill="#c42424"/>
<rect x="493" y="275" width="2" height="6" fill="#c42424"/>
<rect x="496" y="275" width="2" height="7" fill="#c42424"/>
<rect x="500" y="275" width="2" height="8" fill="#c42424"/>
<rect x="504" y="275" width="2" height="10" fill="#c42424"/>
<rect x="508" y="275" width="2" height="11" fill="#c42424"/>
<rect x="511" y="275" width="2" height="12" fill="#c42424"/>
<rect x="515" y="275" width="2" height="10" fill="#c42424"/>
<rect x="519" y="275" width="2" height="10" fill="#c42424"/>
<rect x="522" y="275" width="2" height="10" fill="#c42424"/>
<rect x="526" y="275" width="2" height="9" fill="#c42424"/>
<rect x="530" y="275" width="2" height="8" fill="#c42424"/>
<rect x="534" y="275" width="2" height="3" fill="#c42424"/>
<rect x="537" y="275" width="2" height="1" fill="#c42424"/>
<rect x="552" y="273" width="2" height="1" fill="#c42424"/>
<rect x="556" y="270" width="2" height="4" fill="#c42424"/>
<rect x="560" y="267" width="2" height="7" fill="#c42424"/>
<rect x="563" y="266" width="2" height="8" fill="#c42424"/>
<rect x="567" y="265" width="2" height="9" fill="#c42424"/>
<rect x="571" y="264" width="2" height="10" fill="#c42424"/>
<rect x="575" y="263" width="2" height="11" fill="#c42424"/>
<rect x="578" y="262" width="2" height="12" fill="#c42424"/>
<rect x="582" y="261" width="2" height="13" fill="#c42424"/>
<rect x="586" y="262" width="2" height="12" fill="#c42424"/>
<rect x="589" y="263" width="2" height="11" fill="#c42424"/>
<rect x="593" y="265" width="2" height="9" fill="#c42424"/>
<rect x="597" y="266" width="2" height="8" fill="#c42424"/>
<rect x="601" y="270" width="2" height="4" fill="#c42424"/>
<rect x="608" y="275" width="2" height="1" fill="#c42424"/>
<rect x="612" y="275" width="2" height="2" fill="#c42424"/>
<rect x="616" y="275" width="2" height="3" fill="#c42424"/>
<rect x="619" y="275" width="2" height="4" fill="#c42424"/>
<rect x="623" y="275" width="2" height="5" fill="#c42424"/>
<rect x="627" y="275" width="2" height="5" fill="#c42424"/>
<rect x="630" y="275" width="2" height="5" fill="#c42424"/>
<rect x="634" y="275" width="2" height="6" fill="#c42424"/>
<rect x="638" y="275" width="2" height="6" fill="#c42424"/>
<rect x="642" y="275" width="2" height="3" fill="#c42424"/>
<rect x="657" y="275" width="2" height="2" fill="#c42424"/>
<rect x="660" y="275" width="2" height="5" fill="#c42424"/>
<rect x="664" y="275" width="2" height="5" fill="#c42424"/>
<rect x="668" y="275" width="2" height="6" fill="#c42424"/>
<rect x="671" y="275" width="2" height="6" fill="#c42424"/>
<rect x="675" y="275" width="2" height="5" fill="#c42424"/>
<rect x="679" y="275" width="2" height="5" fill="#c42424"/>
<rect x="683" y="275" width="2" height="2" fill="#c42424"/>
<rect x="690" y="271" width="2" height="3" fill="#c42424"/>
<rect x="694" y="269" width="2" height="5" fill="#c42424"/>
<rect x="697" y="267" width="2" height="7" fill="#c42424"/>
<rect x="701" y="266" width="2" height="8" fill="#c42424"/>
<rect x="705" y="268" width="2" height="6" fill="#c42424"/>
<rect x="709" y="270" width="2" height="4" fill="#c42424"/>
<rect x="712" y="272" width="2" height="2" fill="#c42424"/>
<rect x="720" y="275" width="2" height="1" fill="#c42424"/>
<rect x="724" y="275" width="2" height="1" fill="#c42424"/>
<rect x="727" y="275" width="2" height="1" fill="#c42424"/>
<rect x="731" y="275" width="2" height="2" fill="#c42424"/>
<rect x="735" y="275" width="2" height="2" fill="#c42424"/>
<rect x="738" y="275" width="2" height="2" fill="#c42424"/>
<rect x="742" y="275" width="2" height="2" fill="#c42424"/>
<rect x="746" y="275" width="2" height="1" fill="#c42424"/>
<rect x="802" y="272" width="2" height="2" fill="#c42424"/>
<rect x="806" y="271" width="2" height="3" fill="#c42424"/>
<rect x="809" y="270" width="2" height="4" fill="#c42424"/>
<rect x="813" y="269" width="2" height="5" fill="#c42424"/>
<rect x="817" y="269" width="2" height="5" fill="#c42424"/>
<rect x="820" y="270" width="2" height="4" fill="#c42424"/>
<rect x="824" y="269" width="2" height="5" fill="#c42424"/>
<rect x="828" y="271" width="2" height="3" fill="#c42424"/>
<rect x="832" y="273" width="2" height="1" fill="#c42424"/>
<rect x="835" y="273" width="2" height="1" fill="#c42424"/>
<rect x="839" y="272" width="2" height="2" fill="#c42424"/>
<rect x="843" y="270" width="2" height="4" fill="#c42424"/>
<rect x="846" y="271" width="2" height="3" fill="#c42424"/>
<rect x="850" y="271" width="2" height="3" fill="#c42424"/>
<rect x="854" y="272" width="2" height="2" fill="#c42424"/>
<rect x="858" y="272" width="2" height="2" fill="#c42424"/>
<rect x="861" y="273" width="2" height="1" fill="#c42424"/>
<rect x="865" y="275" width="2" height="1" fill="#c42424"/>
<rect x="869" y="275" width="2" height="1" fill="#c42424"/>
<rect x="873" y="275" width="2" height="1" fill="#c42424"/>
<rect x="876" y="275" width="2" height="1" fill="#c42424"/>
<rect x="880" y="275" width="2" height="1" fill="#c42424"/>
<rect x="884" y="275" width="2" height="1" fill="#c42424"/>
</g>
<polyline points="14.0,310.1 20.5,312.7 27.0,310.7 34.8,312.0 45.2,318.5 51.8,318.5 59.6,314.0 67.4,311.4 79.1,304.9 88.2,306.8 94.7,306.2 105.1,300.3 115.6,303.6 127.3,303.6 139.0,294.5 150.7,287.3 160.0,285.3 165.2,285.3 170.4,288.0 186.0,288.6 192.6,295.8 199.0,299.7 208.2,302.9 214.7,302.9 225.1,297.7 235.5,291.9 240.7,288.6 251.1,286.6 264.2,282.7 274.6,281.4 283.7,282.7 290.2,286.6 298.0,289.2 306.0,286.0 316.4,285.3 325.5,280.8 332.0,282.1 338.6,282.1 347.7,278.2 355.5,278.8 362.0,287.3 369.8,292.5 376.3,294.5 386.7,297.1 397.1,293.2 407.6,282.1 416.7,276.9 429.7,276.9 436.2,274.3 449.2,271.0 456.0,270.4 460.5,268.4 469.6,270.4 480.0,272.3 490.5,281.4 499.6,288.0 508.7,295.8 519.1,307.5 532.1,314.6 542.5,311.4 553.0,306.8 564.7,297.1 575.1,288.0 584.2,274.9 592.0,267.1 604.0,267.5 607.8,268.4 616.9,274.3 626.0,282.1 639.1,286.6 649.5,286.6 658.6,286.0 665.1,291.9 672.9,296.4 679.4,298.4 685.9,290.6 696.4,281.4 704.2,276.9 712.0,279.5 721.1,286.6 730.2,288.6 740.6,289.2 763.2,288.6 772.3,291.2 797.1,290.6 810.1,281.4 820.5,275.6 841.4,274.3 846.6,268.4 851.8,266.5 864.8,266.5 870.0,268.4 883.0,270.4" fill="none" stroke="#1c7e1c" stroke-width="1.15"/>
<polyline points="14.0,297.1 19.2,301.6 27.0,306.2 33.5,307.5 40.0,309.4 47.9,313.3 53.0,314.6 64.8,315.3 71.3,313.3 79.1,310.1 86.9,308.8 94.7,308.1 103.8,304.9 115.6,304.9 127.3,304.2 137.7,300.3 149.4,295.1 160.0,291.2 165.2,288.6 186.0,288.6 192.6,290.6 199.0,293.8 209.5,298.4 218.6,299.0 231.6,299.0 238.1,296.4 251.1,291.2 261.6,288.6 273.3,284.7 287.6,284.7 296.7,285.3 300.6,287.3 306.0,286.6 316.4,286.6 321.6,284.7 332.0,284.7 336.0,282.7 345.0,282.7 350.3,280.8 358.1,280.8 364.6,283.4 373.7,287.3 384.1,291.2 390.6,293.2 398.4,292.9 407.6,288.6 416.7,283.4 429.7,280.1 436.2,278.2 446.6,275.6 454.0,273.0 464.4,271.0 482.6,270.4 487.9,273.0 497.0,278.8 508.7,286.0 519.1,294.5 529.5,302.3 538.6,307.5 545.1,308.8 553.0,308.1 564.7,302.3 577.7,293.8 588.1,284.0 597.2,277.5 604.0,273.3 607.8,272.3 616.9,274.3 628.6,277.5 639.1,281.4 643.0,282.7 652.1,284.7 658.6,285.3 667.7,289.2 678.1,292.5 691.1,292.5 699.0,288.0 709.4,282.7 717.2,282.7 725.0,284.7 732.8,286.6 769.7,286.6 772.3,288.6 799.7,289.2 810.1,286.0 823.1,280.8 829.6,278.8 836.1,278.2 845.3,274.9 855.7,273.0 864.8,269.1 875.2,268.4 883.0,269.7" fill="none" stroke="#c82222" stroke-width="1.25"/>
</g>
<g clip-path="url(#cp3)">
<line x1="14.5" y1="331" x2="883" y2="331" stroke="#1a1aa8" stroke-width="2"/>
<line x1="14.5" y1="386.5" x2="883" y2="386.5" stroke="#1a1aa8" stroke-width="2"/>
<polygon points="15.0,388.0 15.0,386.0 30.0,386.0 45.0,386.0 55.0,386.0 58.0,378.8 60.9,372.9 63.8,378.8 70.6,379.7 72.6,373.9 75.5,371.5 80.4,374.9 86.3,381.7 90.2,384.0 96.0,375.8 99.9,371.0 103.8,373.9 109.7,380.7 113.6,384.6 119.5,385.2 122.4,387.5 125.3,389.1 126.3,369.0 131.2,367.0 139.0,366.1 142.9,361.8 146.8,365.1 150.3,356.7 153.7,366.1 161.5,363.1 168.3,373.9 172.2,378.2 177.1,373.5 180.0,374.9 185.9,367.0 187.8,368.0 191.7,388.5 194.7,389.9 198.6,380.7 206.4,378.8 209.3,383.6 218.1,371.9 224.9,371.9 231.8,369.0 235.7,357.3 239.9,361.2 245.7,365.1 249.6,367.0 255.5,367.6 261.3,372.3 265.3,352.4 269.2,363.1 273.1,364.1 277.0,365.1 280.9,371.0 286.7,373.9 291.6,381.3 295.5,377.4 299.4,379.7 302.4,368.0 306.3,359.2 310.2,367.0 318.0,366.1 324.8,353.4 328.7,369.0 333.6,367.0 336.5,368.0 340.4,360.2 347.3,355.3 352.2,360.2 358.0,378.8 361.9,383.6 369.7,373.9 373.6,379.3 377.6,372.9 382.4,377.4 389.3,375.8 396.1,363.1 402.9,350.4 407.8,356.3 410.8,352.4 415.6,359.2 419.5,353.4 424.4,364.1 429.3,360.2 436.1,347.5 440.6,360.2 444.9,355.3 454.7,357.3 458.9,348.5 463.8,357.3 469.6,358.3 477.4,354.3 481.3,368.0 486.2,373.9 489.2,372.9 493.1,379.3 497.0,376.8 502.8,378.2 506.7,387.5 515.5,395.4 522.4,387.5 530.2,393.4 534.1,386.6 538.0,379.3 540.9,378.8 544.8,382.7 549.7,373.5 553.6,372.3 560.4,365.1 567.3,355.9 572.2,361.8 575.1,360.2 579.0,341.6 582.9,342.6 586.8,346.1 593.6,345.6 600.5,357.3 608.3,359.2 616.1,375.8 620.0,371.9 626.9,379.3 631.7,371.9 639.5,374.9 645.4,371.9 652.2,363.1 656.1,370.9 660.0,386.6 664.0,389.1 666.9,382.7 674.0,382.7 678.9,383.6 681.8,365.1 686.7,357.3 690.6,363.1 693.5,349.5 699.4,350.4 701.3,350.4 712.1,370.9 722.8,378.2 730.6,371.9 734.5,363.1 738.5,371.9 749.2,363.1 754.1,369.0 759.9,371.5 765.8,371.9 772.6,384.6 775.6,368.0 779.5,367.6 782.4,371.9 786.3,371.0 791.2,374.3 798.0,362.2 806.8,355.3 810.7,356.3 813.6,360.2 819.5,346.0 825.4,359.2 829.3,362.2 838.1,358.3 842.0,337.7 845.9,352.4 850.8,351.4 857.6,355.3 864.4,351.4 869.3,359.2 872.2,357.9 876.1,360.2 883.0,356.3 883.0,388.0" fill="url(#rg)"/>
<polyline points="15.0,386.0 30.0,386.0 45.0,386.0 55.0,386.0 58.0,378.8 60.9,372.9 63.8,378.8 70.6,379.7 72.6,373.9 75.5,371.5 80.4,374.9 86.3,381.7 90.2,384.0 96.0,375.8 99.9,371.0 103.8,373.9 109.7,380.7 113.6,384.6 119.5,385.2 122.4,387.5 125.3,389.1 126.3,369.0 131.2,367.0 139.0,366.1 142.9,361.8 146.8,365.1 150.3,356.7 153.7,366.1 161.5,363.1 168.3,373.9 172.2,378.2 177.1,373.5 180.0,374.9 185.9,367.0 187.8,368.0 191.7,388.5 194.7,389.9 198.6,380.7 206.4,378.8 209.3,383.6 218.1,371.9 224.9,371.9 231.8,369.0 235.7,357.3 239.9,361.2 245.7,365.1 249.6,367.0 255.5,367.6 261.3,372.3 265.3,352.4 269.2,363.1 273.1,364.1 277.0,365.1 280.9,371.0 286.7,373.9 291.6,381.3 295.5,377.4 299.4,379.7 302.4,368.0 306.3,359.2 310.2,367.0 318.0,366.1 324.8,353.4 328.7,369.0 333.6,367.0 336.5,368.0 340.4,360.2 347.3,355.3 352.2,360.2 358.0,378.8 361.9,383.6 369.7,373.9 373.6,379.3 377.6,372.9 382.4,377.4 389.3,375.8 396.1,363.1 402.9,350.4 407.8,356.3 410.8,352.4 415.6,359.2 419.5,353.4 424.4,364.1 429.3,360.2 436.1,347.5 440.6,360.2 444.9,355.3 454.7,357.3 458.9,348.5 463.8,357.3 469.6,358.3 477.4,354.3 481.3,368.0 486.2,373.9 489.2,372.9 493.1,379.3 497.0,376.8 502.8,378.2 506.7,387.5 515.5,395.4 522.4,387.5 530.2,393.4 534.1,386.6 538.0,379.3 540.9,378.8 544.8,382.7 549.7,373.5 553.6,372.3 560.4,365.1 567.3,355.9 572.2,361.8 575.1,360.2 579.0,341.6 582.9,342.6 586.8,346.1 593.6,345.6 600.5,357.3 608.3,359.2 616.1,375.8 620.0,371.9 626.9,379.3 631.7,371.9 639.5,374.9 645.4,371.9 652.2,363.1 656.1,370.9 660.0,386.6 664.0,389.1 666.9,382.7 674.0,382.7 678.9,383.6 681.8,365.1 686.7,357.3 690.6,363.1 693.5,349.5 699.4,350.4 701.3,350.4 712.1,370.9 722.8,378.2 730.6,371.9 734.5,363.1 738.5,371.9 749.2,363.1 754.1,369.0 759.9,371.5 765.8,371.9 772.6,384.6 775.6,368.0 779.5,367.6 782.4,371.9 786.3,371.0 791.2,374.3 798.0,362.2 806.8,355.3 810.7,356.3 813.6,360.2 819.5,346.0 825.4,359.2 829.3,362.2 838.1,358.3 842.0,337.7 845.9,352.4 850.8,351.4 857.6,355.3 864.4,351.4 869.3,359.2 872.2,357.9 876.1,360.2 883.0,356.3" fill="none" stroke="#f0902c" stroke-width="1.05"/>
<polyline points="119.5,385.2 122.4,387.5 125.3,389.1" fill="none" stroke="#30dc30" stroke-width="1.05"/>
<polyline points="187.8,368.0 191.7,388.5 194.7,389.9" fill="none" stroke="#30dc30" stroke-width="1.05"/>
<polyline points="502.8,378.2 506.7,387.5 515.5,395.4 522.4,387.5 530.2,393.4 534.1,386.6" fill="none" stroke="#30dc30" stroke-width="1.05"/>
<polyline points="656.1,370.9 660.0,386.6 664.0,389.1" fill="none" stroke="#30dc30" stroke-width="1.05"/>
</g>
<rect x="14.5" y="40.5" width="883.0" height="211.0" fill="none" stroke="#b4c0c8"/>
<rect x="14.5" y="258.5" width="883.0" height="64.0" fill="none" stroke="#b4c0c8"/>
<rect x="14.5" y="328.5" width="883.0" height="74.0" fill="none" stroke="#b4c0c8"/>
<rect x="14.5" y="379.5" width="62.0" height="19" rx="2" fill="#5c6a7e" stroke="#b4c4d0"/>
<line x1="14.5" y1="379" x2="14.5" y2="405" stroke="#c8e8e0" stroke-width="2"/>
<rect x="407.5" y="379.5" width="63.0" height="19" rx="2" fill="#5c6a7e" stroke="#b4c4d0"/>
<line x1="407.5" y1="379" x2="407.5" y2="405" stroke="#c8e8e0" stroke-width="2"/>
<rect x="876.5" y="379.5" width="70.0" height="19" rx="2" fill="#5c6a7e" stroke="#b4c4d0"/>
<line x1="876.5" y1="379" x2="876.5" y2="405" stroke="#c8e8e0" stroke-width="2"/>
</svg>
<div class="dl" style="left:6.2px">8</div>
<div class="dl" style="left:28.6px">9</div>
<div class="dl" style="left:50.9px">12</div>
<div class="dl" style="left:73.3px">13</div>
<div class="dl" style="left:95.6px">14</div>
<div class="dl" style="left:118.0px">15</div>
<div class="dl" style="left:140.3px">16</div>
<div class="dl" style="left:162.7px">19</div>
<div class="dl" style="left:185.0px">20</div>
<div class="dl" style="left:207.4px">21</div>
<div class="dl" style="left:229.8px">22</div>
<div class="dl" style="left:252.1px">23</div>
<div class="dl" style="left:274.5px">26</div>
<div class="dl" style="left:296.8px">27</div>
<div class="dl" style="left:319.2px">28</div>
<div class="dl" style="left:341.5px">29</div>
<div class="dl" style="left:363.9px">30</div>
<div class="dl" style="left:386.2px">3</div>
<div class="dl" style="left:408.6px">4</div>
<div class="dl" style="left:430.9px">5</div>
<div class="dl" style="left:453.3px">6</div>
<div class="dl" style="left:475.7px">7</div>
<div class="dl" style="left:498.0px">10</div>
<div class="dl" style="left:520.4px">11</div>
<div class="dl" style="left:542.7px">12</div>
<div class="dl" style="left:565.1px">13</div>
<div class="dl" style="left:587.4px">14</div>
<div class="dl" style="left:609.8px">17</div>
<div class="dl" style="left:632.1px">18</div>
<div class="dl" style="left:654.5px">19</div>
<div class="dl" style="left:676.9px">20</div>
<div class="dl" style="left:699.2px">21</div>
<div class="dl" style="left:721.6px">24</div>
<div class="dl" style="left:743.9px">25</div>
<div class="dl" style="left:766.3px">26</div>
<div class="dl" style="left:788.6px">27</div>
<div class="dl" style="left:811.0px">28</div>
<div class="dl" style="left:833.3px">31</div>
<div class="dl" style="left:855.7px">1</div>
<div class="pl" style="top:67.5px">0.9300</div>
<div class="pl" style="top:113.0px">0.9200</div>
<div class="pl" style="top:158.5px">0.9100</div>
<div class="pl" style="top:271px">+0.000</div>
<div class="pl" style="top:342px">60</div>
<div class="pl" style="top:369px">40</div>
<div class="mb" style="left:22px">Апр 2021</div>
<div class="mb" style="left:415px">Май 2021</div>
<div class="mb" style="left:884px">Июнь 2021</div>
<div class="lgt" style="left:16px;color:#1c1ce0">Exponential_Moving_Average</div>
<div class="lgt" style="left:154px;color:#e02020">Exponential_Moving_Average</div>
<div id="leg"></div><div id="legt"></div>
<div class="sq" style="left:18px;background:linear-gradient(#f85050,#d02020);border:1px solid #a01010"></div>
<div class="sq" style="left:31px;background:linear-gradient(#40b0e8,#1878c0);border:1px solid #105890"></div>
<div id="macdl">MACD</div>
<div id="rsil"></div><div id="rsit">RSI</div>
<div id="pricebox" style="position:absolute;left:897px;top:200px;width:48px;height:21px;background:#fff"></div>
<div style="position:absolute;left:905px;top:204px;font-size:11px;line-height:13px;color:#3c4450">0.8990</div>
</body></html>
